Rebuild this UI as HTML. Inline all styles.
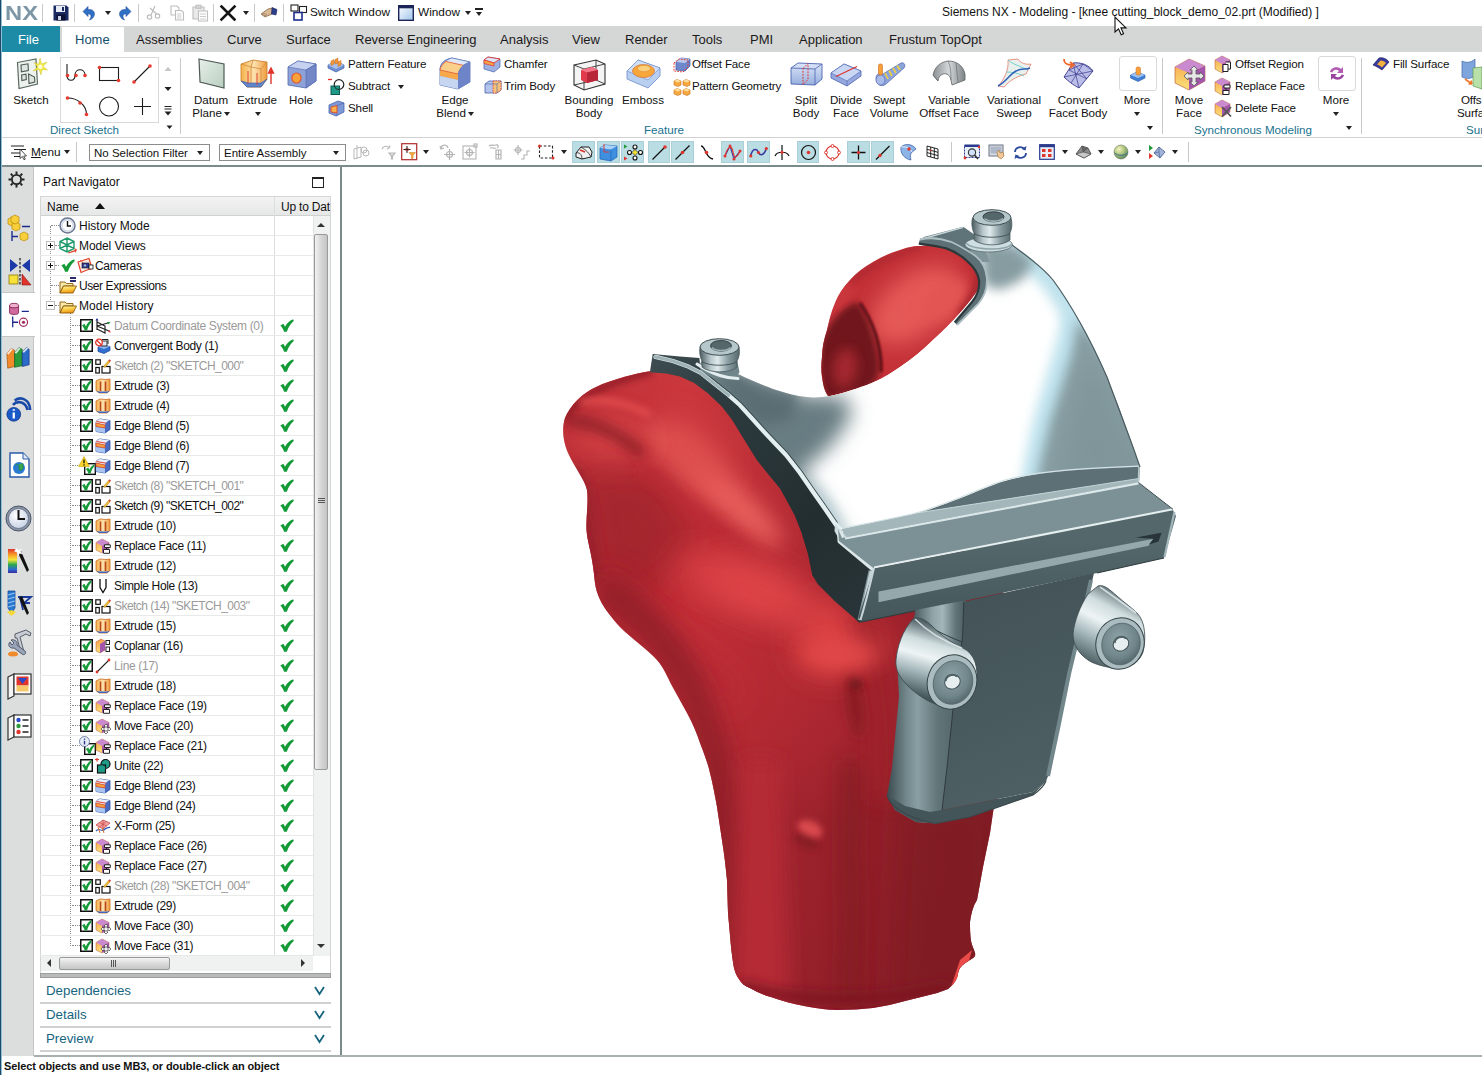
<!DOCTYPE html>
<html><head><meta charset="utf-8"><title>Siemens NX</title>
<style>
*{box-sizing:border-box;margin:0;padding:0}
html,body{width:1482px;height:1075px;overflow:hidden;background:#fff}
body{font-family:"Liberation Sans",sans-serif;font-size:12px;color:#111;position:relative}
.a{position:absolute}
.t{position:absolute;white-space:nowrap;line-height:14px;height:14px}
.c{text-align:center}
svg{position:absolute;overflow:visible}
#titlebar{left:0;top:0;width:1482px;height:26px;background:#fff}
#tabbar{left:0;top:26px;width:1482px;height:26px;background:#d5d6d6}
#ribbon{left:0;top:52px;width:1482px;height:86px;background:#fff;border-bottom:1px solid #d2d2d2}
#toolbar{left:0;top:138px;width:1482px;height:28px;background:#fff}
.vsep{position:absolute;width:1px;background:#c9c9c9}
.tab{position:absolute;top:31.5px;font-size:13px;line-height:15px;white-space:nowrap;color:#1a1a1a}
.rl{margin-top:-1px;position:absolute;font-size:11.6px;line-height:13px;white-space:nowrap;color:#111;text-align:center;transform:translateX(-50%)}
.rs{margin-top:-1px;position:absolute;font-size:11.6px;line-height:13px;white-space:nowrap;color:#111;letter-spacing:-0.15px}
.gl{margin-top:-1px;position:absolute;font-size:11.6px;line-height:13px;white-space:nowrap;color:#17718e;top:124px}
.dd{position:absolute;width:0;height:0;border-left:3px solid transparent;border-right:3px solid transparent;border-top:4px solid #222}
.row{position:absolute;left:40px;width:273px;height:20px;border-bottom:1px solid #e8eaea}
.row .n{position:absolute;top:3px;font-size:12px;line-height:14px;white-space:nowrap;color:#111;letter-spacing:-0.15px}
.row .g{color:#9a9a9a}
.hl{background:#badde4;border:1px solid #a9d0d9;position:absolute;top:141px;height:22px}
</style></head><body>
<div id="titlebar" class="a">
  <div class="t" style="left:5px;top:2px;font-size:21px;line-height:22px;height:22px;font-weight:700;color:#7c96a6;letter-spacing:0;transform:scaleX(1.13);transform-origin:left">NX</div>
  <div class="vsep" style="left:42px;top:4px;height:18px"></div>
  <!-- save -->
  <svg style="left:53px;top:5px" width="16" height="16" viewBox="0 0 16 16"><path d="M0.5 0.5h13l2 2v13h-15z" fill="#1b2a63"/><rect x="3" y="1" width="9" height="6" fill="#e8ecf4"/><rect x="9" y="2" width="2" height="4" fill="#1b2a63"/><rect x="3.5" y="9.5" width="9" height="6" fill="#0b1233"/><rect x="5" y="11" width="3" height="4" fill="#c8d0e4"/></svg>
  <div class="vsep" style="left:74px;top:4px;height:18px"></div>
  <!-- undo -->
  <svg style="left:82px;top:5px" width="15" height="16" viewBox="0 0 15 16"><path d="M1 6.5 L6 1.5 L6 4.5 C11 4 13.5 7 12 11 C11 13.5 9 14.5 7.5 15 C9.5 12.5 10 9 6 8.7 L6 11.5 Z" fill="#2f6fc4" stroke="#1d4fa0" stroke-width="0.6"/></svg>
  <div class="dd" style="left:105px;top:11px"></div>
  <!-- redo -->
  <svg style="left:117px;top:5px" width="15" height="16" viewBox="0 0 15 16"><path d="M14 6.5 L9 1.5 L9 4.5 C4 4 1.5 7 3 11 C4 13.5 6 14.5 7.5 15 C5.5 12.5 5 9 9 8.7 L9 11.5 Z" fill="#2f6fc4" stroke="#1d4fa0" stroke-width="0.6"/></svg>
  <div class="vsep" style="left:138px;top:4px;height:18px"></div>
  <!-- cut copy paste (disabled) -->
  <svg style="left:146px;top:5px" width="15" height="16" viewBox="0 0 15 16" fill="none" stroke="#bdbdbd" stroke-width="1.2"><path d="M9 1 L5 10 M4 3 L10.5 9"/><circle cx="3.5" cy="12" r="2.2"/><circle cx="11.5" cy="11" r="2.2"/></svg>
  <svg style="left:170px;top:5px" width="15" height="16" viewBox="0 0 15 16" fill="#fff" stroke="#bdbdbd" stroke-width="1.1"><path d="M1 1h6l2 2v7h-8z"/><path d="M5.5 5.5h6l2 2v7.5h-8z"/><path d="M7 9h4.5M7 11h4.5M7 13h4.5" stroke-width="0.8"/></svg>
  <svg style="left:192px;top:4px" width="17" height="18" viewBox="0 0 17 18" fill="#fff" stroke="#bdbdbd" stroke-width="1.1"><path d="M1 3h11v12h-11z" fill="#e9e9e9"/><path d="M4 1.2h5v3h-5z" fill="#d8d8d8"/><path d="M6.5 7h9v10h-9z"/><path d="M8 10h6M8 12.5h6M8 15h6" stroke-width="0.8"/></svg>
  <div class="vsep" style="left:213px;top:4px;height:18px"></div>
  <svg style="left:220px;top:5px" width="16" height="16" viewBox="0 0 16 16"><path d="M1.5 1.5 L14.5 14.5 M14.5 1.5 L1.5 14.5" stroke="#151515" stroke-width="2.6" stroke-linecap="square"/></svg>
  <div class="dd" style="left:243px;top:11px"></div>
  <div class="vsep" style="left:254px;top:4px;height:18px"></div>
  <svg style="left:260px;top:6px" width="18" height="13" viewBox="0 0 18 13"><path d="M1 8 L8 3 L13 2 L12 8 L5 11 Z" fill="#d8b896" stroke="#7a5a3a" stroke-width="0.7"/><path d="M12 1.5 L17 3.5 L16 9 L11.5 8 Z" fill="#2c3e8a" stroke="#1a2458" stroke-width="0.6"/><path d="M2 8.5l3-1M4 10l3-1.5" stroke="#7a5a3a" stroke-width="0.6"/></svg>
  <div class="vsep" style="left:283px;top:4px;height:18px"></div>
  <svg style="left:290px;top:4px" width="17" height="17" viewBox="0 0 17 17" fill="#fff" stroke="#222" stroke-width="1.1"><rect x="1" y="1" width="7" height="6"/><rect x="9.5" y="2.5" width="7" height="6"/><rect x="4" y="8.5" width="8" height="7.5" stroke="#1c2f8c" stroke-width="1.6"/></svg>
  <div class="t" style="left:310px;top:5px;font-size:11.8px">Switch Window</div>
  <svg style="left:398px;top:5px" width="16" height="16" viewBox="0 0 16 16"><defs><linearGradient id="wg" x1="0" y1="0" x2="1" y2="1"><stop offset="0" stop-color="#fff"/><stop offset="1" stop-color="#9fc4ec"/></linearGradient></defs><rect x="0.7" y="0.7" width="14.6" height="14.6" fill="url(#wg)" stroke="#1c2458" stroke-width="1.4"/><rect x="0.7" y="0.7" width="14.6" height="2.6" fill="#1c2458"/></svg>
  <div class="t" style="left:418px;top:5px;font-size:11.8px">Window</div>
  <div class="dd" style="left:465px;top:11px"></div>
  <div class="a" style="left:475px;top:8px;width:8px;height:1.5px;background:#222"></div>
  <div class="dd" style="left:476px;top:12px"></div>
  <div class="t" style="left:942px;top:5px;font-size:12px">Siemens NX - Modeling - [knee cutting_block_demo_02.prt (Modified) ]</div>

</div>
<div id="tabbar" class="a"></div>
<div class="a" style="left:0;top:26px;width:60px;height:26px;background:#1d8ba5"></div>
<div class="tab" style="left:18px;color:#fff">File</div>
<div class="a" style="left:62px;top:27px;width:62px;height:26px;background:#fff"></div>
<div class="tab" style="left:75px;color:#14506c">Home</div>
<div class="tab" style="left:136px">Assemblies</div>
<div class="tab" style="left:227px">Curve</div>
<div class="tab" style="left:286px">Surface</div>
<div class="tab" style="left:355px">Reverse Engineering</div>
<div class="tab" style="left:500px">Analysis</div>
<div class="tab" style="left:572px">View</div>
<div class="tab" style="left:625px">Render</div>
<div class="tab" style="left:692px">Tools</div>
<div class="tab" style="left:750px">PMI</div>
<div class="tab" style="left:799px">Application</div>
<div class="tab" style="left:889px">Frustum TopOpt</div>
<svg style="left:1114px;top:16px" width="14" height="20" viewBox="0 0 14 20"><path d="M1 1 L1 16 L4.5 12.8 L7.2 18.8 L9.6 17.7 L7 11.9 L12 11.9 Z" fill="#fff" stroke="#111" stroke-width="1.1" stroke-linejoin="miter"/></svg>
<div id="ribbon" class="a"></div>
<svg width="0" height="0" style="left:0;top:0"><defs>
<linearGradient id="gOr" x1="0" y1="0" x2="1" y2="0"><stop offset="0" stop-color="#f6b24a"/><stop offset="0.5" stop-color="#fde2b0"/><stop offset="1" stop-color="#ee9a3a"/></linearGradient>
<linearGradient id="gBl" x1="0" y1="0" x2="1" y2="1"><stop offset="0" stop-color="#c9d7f2"/><stop offset="1" stop-color="#7f96d0"/></linearGradient>
<linearGradient id="gBl2" x1="0" y1="0" x2="0" y2="1"><stop offset="0" stop-color="#dbe6f8"/><stop offset="1" stop-color="#97aedd"/></linearGradient>
<linearGradient id="gGr" x1="0" y1="0" x2="1" y2="1"><stop offset="0" stop-color="#e6efe8"/><stop offset="1" stop-color="#b9cfc0"/></linearGradient>
<linearGradient id="gPu" x1="0" y1="0" x2="1" y2="1"><stop offset="0" stop-color="#d9a6d6"/><stop offset="1" stop-color="#9a4fa0"/></linearGradient>
<linearGradient id="gOy" x1="0" y1="0" x2="0" y2="1"><stop offset="0" stop-color="#f6a14a"/><stop offset="1" stop-color="#fbe27a"/></linearGradient>
<linearGradient id="gMt" x1="0" y1="0" x2="1" y2="0"><stop offset="0" stop-color="#8a8f92"/><stop offset="0.5" stop-color="#d4d8da"/><stop offset="1" stop-color="#7c8285"/></linearGradient>
</defs></svg>
<!-- Sketch -->
<svg style="left:16px;top:57px" width="32" height="34" viewBox="0 0 32 34"><path d="M1.5 5.5 L20 2 L21.5 27 L3 31.5 Z" fill="#eef2ee" stroke="#5b6b62" stroke-width="1.2"/><path d="M5 8 L12 6.8 L12.4 13.5 L5.4 14.8Z M5.6 18 L10 17.2 L10.3 22.5 L5.9 23.5Z M12.5 17 L18.5 20 L18.8 25 L13 26.5Z" fill="#dfe6e0" stroke="#4b5a52" stroke-width="1.1"/><path d="M24 1 L25.5 7 L31 5 L27 9.5 L31.5 13 L26 12.5 L25 18 L23 12.5 L17 14 L21.5 10 L18 5.5 L22.8 7.2 Z" fill="#f4ea3c" stroke="#c9c23a" stroke-width="0.5"/><circle cx="24.3" cy="9.8" r="2.2" fill="#fffde0"/></svg>
<div class="rl" style="left:31px;top:94px">Sketch</div>
<div class="a" style="left:60px;top:57px;width:99px;height:66px;border:1px solid #d9d9d9;background:#fff"></div>
<svg style="left:62px;top:58px" width="96" height="64" viewBox="0 0 96 64" fill="none" stroke="#1d1d1d" stroke-width="1.1">
 <path d="M5 6 L5 17 C5 24 13 24 13 17 C13 10 23 10 23 17"/><circle cx="5.5" cy="17.5" r="1.8" fill="#e8392f" stroke="none"/><circle cx="14" cy="17.5" r="1.8" fill="#e8392f" stroke="none"/><circle cx="23" cy="17.5" r="1.8" fill="#e8392f" stroke="none"/>
 <rect x="37.5" y="9.500" width="19" height="13"/><circle cx="37.5" cy="9.500" r="1.8" fill="#e8392f" stroke="none"/><circle cx="56.5" cy="22.5" r="1.8" fill="#e8392f" stroke="none"/>
 <path d="M72 24 L88 8"/><circle cx="72" cy="24" r="1.8" fill="#e8392f" stroke="none"/><circle cx="88" cy="8" r="1.8" fill="#e8392f" stroke="none"/>
 <path d="M5.500 40 C16 40 24 47 24.500 56"/><circle cx="5.500" cy="40" r="1.800" fill="#e8392f" stroke="none"/><circle cx="18" cy="45" r="1.800" fill="#e8392f" stroke="none"/><circle cx="24.500" cy="56.500" r="1.800" fill="#e8392f" stroke="none"/>
 <circle cx="47" cy="48.500" r="9.500"/>
 <path d="M80.500 40 L80.500 57 M72 48.500 L89 48.500"/>
</svg>
<svg style="left:163px;top:64px" width="10" height="70" viewBox="0 0 10 70"><path d="M1.500 7 L8.500 7 L5 3 Z" fill="#c4c4c4"/><path d="M1.500 23 L8.500 23 L5 27 Z" fill="#222"/><path d="M1.500 42.500 H8.500 M1.500 45 H8.500" stroke="#222" stroke-width="1.2"/><path d="M1.500 47.500 L8.500 47.500 L5 51.500 Z" fill="#222"/><path d="M3.500 61.500 L9.500 61.500 L6.500 65 Z" fill="#222"/></svg>
<div class="gl" style="left:50px">Direct Sketch</div>
<div class="vsep" style="left:180px;top:58px;height:76px"></div>
<!-- Datum Plane -->
<svg style="left:197px;top:57px" width="30" height="33" viewBox="0 0 30 33"><path d="M2 2 L27 7 L27 31 L3 25 Z" fill="url(#gGr)" stroke="#4e5a54" stroke-width="1.2"/></svg>
<div class="rl" style="left:211px;top:94px">Datum</div><div class="rl" style="left:207px;top:107px">Plane</div><div class="dd" style="left:224px;top:112px"></div>
<!-- Extrude -->
<svg style="left:239px;top:57px" width="36" height="33" viewBox="0 0 36 33"><path d="M2 24 L2 7 L14 3 L28 5 L28 22 L22 30 L8 30 Z" fill="url(#gOr)" stroke="#c9782a" stroke-width="0.8"/><path d="M2 7 L12 10 L14 3 M12 10 L12 30 M12 10 L22 12 L28 5 M22 12 L22 30" stroke="#d08a3e" stroke-width="0.8" fill="none"/><path d="M2 24 L8 30 L22 30 L28 22 L22 26 L10 26 Z" fill="#5f86cc" stroke="#3c5ea8" stroke-width="0.6"/><path d="M32 27 L32 13 M29.500 16 L32 11 L34.500 16 Z" stroke="#e0342c" stroke-width="1.4" fill="#e0342c"/><path d="M9 14 V27 M18 16 V28" stroke="#e0342c" stroke-width="0.9"/></svg>
<div class="rl" style="left:257px;top:94px">Extrude</div><div class="dd" style="left:255px;top:112px"></div>
<!-- Hole -->
<svg style="left:286px;top:58px" width="32" height="32" viewBox="0 0 32 32"><path d="M2 9 L12 3 L30 6 L30 23 L20 30 L2 27 Z" fill="#8ea2d8" stroke="#5068b0" stroke-width="0.8"/><path d="M2 9 L20 12 L30 6 L12 3 Z" fill="#c6d2f0" stroke="#5068b0" stroke-width="0.6"/><path d="M20 12 L20 30 L30 23 L30 6 Z" fill="#7386c6" stroke="#5068b0" stroke-width="0.6"/><ellipse cx="10.500" cy="20" rx="4.600" ry="5" fill="#f9a13a" stroke="#e2572a" stroke-width="1.2"/></svg>
<div class="rl" style="left:301px;top:94px">Hole</div>
<!-- small col 1 -->
<svg style="left:327px;top:56px" width="18" height="17" viewBox="0 0 18 17"><path d="M1 9 L9 5 L17 9 L17 12 L9 16 L1 12 Z" fill="#6f8fd2" stroke="#3f5ea8" stroke-width="0.7"/><path d="M1 9 L9 13 L17 9 L9 5 Z" fill="#a9c0ea"/><path d="M4 5 L7 3.500 L7 8 L4 9.500Z M8 3.500 L11 2 L11 7 L8 8Z M11 6 L14 4.500 L14 9 L11 10.500Z" fill="#f59a3a" stroke="#c96a1e" stroke-width="0.5"/></svg>
<div class="rs" style="left:348px;top:58px">Pattern Feature</div>
<svg style="left:328px;top:78px" width="18" height="18" viewBox="0 0 18 18"><path d="M0 1.500 H4" stroke="#e0342c" stroke-width="1.3"/><circle cx="11" cy="6.500" r="4.800" fill="#fff" stroke="#222" stroke-width="1.200"/><rect x="3" y="8" width="8.500" height="8.500" fill="#1f9a86" stroke="#0f5a50" stroke-width="1"/><path d="M6.300 8 A4.800 4.800 0 0 0 11.500 11.300" fill="none" stroke="#222" stroke-width="1"/></svg>
<div class="rs" style="left:348px;top:80px">Subtract</div><div class="dd" style="left:398px;top:85px"></div>
<svg style="left:328px;top:100px" width="17" height="17" viewBox="0 0 17 17"><path d="M1 5 L10 1 L16 3 L16 12 L8 16 L1 13 Z" fill="#7f98d6" stroke="#4562ac" stroke-width="0.8"/><path d="M3 7 L9 5.500 L9 13 L3 12 Z" fill="#f7b04a" stroke="#d9482a" stroke-width="0.9"/><path d="M9 5.500 L16 3 M9 13 L9 16" stroke="#4562ac" stroke-width="0.6"/></svg>
<div class="rs" style="left:348px;top:102px">Shell</div>
<!-- Edge blend -->
<svg style="left:438px;top:56px" width="34" height="35" viewBox="0 0 34 35"><path d="M2 14 C2 6 8 3 14 2 L32 6 L32 26 L20 33 L2 29 Z" fill="#8fa6dc" stroke="#4562ac" stroke-width="0.8"/><path d="M2 14 C2 8 8 4 14 2 L32 6 C26 8 21 11 20 18 Z" fill="#dfe8f8" stroke="#4562ac" stroke-width="0.5"/><path d="M2 14 L20 18 L20 24 L2 20 Z" fill="#f7a94a"/><path d="M2 14 C3 10 5 7.500 8 5.500 L26 9.500 C23 11.500 21 14 20 18 Z" fill="#fbd08a" stroke="#e4572e" stroke-width="0.8"/><path d="M2 20 L20 24 L20 33 L2 29 Z" fill="#c7d6f0"/><path d="M20 18 L20 33 L32 26 L32 6 C26 8 21 11 20 18Z" fill="#6d84c8"/></svg>
<div class="rl" style="left:455px;top:94px">Edge</div><div class="rl" style="left:451px;top:107px">Blend</div><div class="dd" style="left:468px;top:112px"></div>
<!-- Chamfer / Trim body -->
<svg style="left:483px;top:56px" width="18" height="17" viewBox="0 0 18 17"><path d="M1 4 L5 1 L17 3 L17 11 L11 16 L1 13 Z" fill="#9db2e2" stroke="#4562ac" stroke-width="0.7"/><path d="M1 4 L11 7 L17 3 L5 1 Z" fill="#dce6f8" stroke="#e0342c" stroke-width="0.9"/><path d="M1 4 L11 7 L11 10 L1 7.500 Z" fill="#f6a54a" stroke="#e0342c" stroke-width="0.7"/></svg>
<div class="rs" style="left:504px;top:58px">Chamfer</div>
<svg style="left:484px;top:79px" width="18" height="16" viewBox="0 0 18 16"><path d="M1 5 L5 2 L17 2 L17 11 L13 14 L1 14 Z" fill="#b4c4ea" stroke="#4562ac" stroke-width="0.8"/><path d="M9 2 L17 2 L17 11 L13 14 L9 14 Z" fill="#f8c27a" stroke="#e0342c" stroke-width="0.8" stroke-dasharray="1.500 1"/><path d="M1 5 H13 V14 M13 5 L17 2" stroke="#4562ac" stroke-width="0.6" fill="none"/></svg>
<div class="rs" style="left:504px;top:80px">Trim Body</div>
<!-- Bounding Body -->
<svg style="left:572px;top:57px" width="35" height="35" viewBox="0 0 35 35"><path d="M2 8 L24 3 L33 7 L33 27 L12 33 L2 28 Z" fill="#f4f4f4" stroke="#333" stroke-width="1.100"/><path d="M2 8 L12 12 L33 7 M12 12 L12 33 M24 3 L24 23 L2 28 M24 23 L33 27" stroke="#333" stroke-width="0.900" fill="none"/><path d="M9 13 L20 10 L26 13 L26 23 L15 26 L9 23 Z" fill="#e03a4c"/><path d="M9 13 L15 15.500 L26 13 L20 10 Z" fill="#f27486"/><path d="M15 15.500 L15 26 L26 23 L26 13 Z" fill="#b8263a"/></svg>
<div class="rl" style="left:589px;top:94px">Bounding</div><div class="rl" style="left:589px;top:107px">Body</div>
<!-- Emboss -->
<svg style="left:626px;top:58px" width="36" height="32" viewBox="0 0 36 32"><path d="M1 13 L12 2 L34 10 L34 18 L22 30 L1 21 Z" fill="#b9cff0" stroke="#6c8cc8" stroke-width="0.800"/><path d="M1 13 L22 22 L34 10 L12 2 Z" fill="#cfe0f8" stroke="#6c8cc8" stroke-width="0.600"/><ellipse cx="17.500" cy="13" rx="11" ry="6.500" fill="#f7a63a" stroke="#d9712a" stroke-width="0.700"/><ellipse cx="18" cy="10.500" rx="6.500" ry="3.200" fill="#fbd07a" stroke="#e08a2e" stroke-width="0.600"/></svg>
<div class="rl" style="left:643px;top:94px">Emboss</div>
<svg style="left:673px;top:56px" width="18" height="17" viewBox="0 0 18 17"><path d="M3 6 L8 2 L17 3 L17 10 L12 15 L3 14 Z" fill="#6f88cc" stroke="#3c54a0" stroke-width="0.700"/><path d="M3 6 L12 7 L17 3 L8 2Z" fill="#b8c8ee"/><path d="M1 7 L6 3 L15 4 L15 11 L10 16 L1 15 Z" fill="none" stroke="#e0342c" stroke-width="1" stroke-dasharray="1.600 1.200"/></svg>
<div class="rs" style="left:692px;top:58px">Offset Face</div>
<svg style="left:673px;top:78px" width="18" height="18" viewBox="0 0 18 18"><g fill="#f7a83e" stroke="#c9701e" stroke-width="0.600"><path d="M1 3 L4 1.500 L8 3 L8 7 L5 8.500 L1 7 Z"/><path d="M10 3 L13 1.500 L17 3 L17 7 L14 8.500 L10 7 Z"/><path d="M1 12 L4 10.500 L8 12 L8 16 L5 17.500 L1 16 Z"/><path d="M10 12 L13 10.500 L17 12 L17 16 L14 17.500 L10 16 Z"/></g><g fill="#fde0a0"><path d="M1 3 L5 4.500 L8 3 L4 1.500Z"/><path d="M10 3 L14 4.500 L17 3 L13 1.500Z"/><path d="M1 12 L5 13.500 L8 12 L4 10.500Z"/><path d="M10 12 L14 13.500 L17 12 L13 10.500Z"/></g></svg>
<div class="rs" style="left:692px;top:80px">Pattern Geometry</div>
<div class="gl" style="left:644px">Feature</div>
<!-- Split Body -->
<svg style="left:790px;top:62px" width="33" height="25" viewBox="0 0 33 25"><path d="M1 6 L8 1 L32 2 L32 17 L25 23 L1 22 Z" fill="url(#gBl2)" stroke="#4a62b0" stroke-width="0.900"/><path d="M1 6 L25 7 L32 2 M25 7 L25 23" stroke="#4a62b0" stroke-width="0.800" fill="none"/><path d="M13 6.500 L18 1.500 L18 17.500 L13 22.500 Z" fill="none" stroke="#e0342c" stroke-width="1" stroke-dasharray="1.800 1.200"/></svg>
<div class="rl" style="left:806px;top:94px">Split</div><div class="rl" style="left:806px;top:107px">Body</div>
<!-- Divide Face -->
<svg style="left:830px;top:63px" width="32" height="24" viewBox="0 0 32 24"><path d="M1 10 L14 1 L31 8 L31 13 L17 23 L1 15 Z" fill="#95a9de" stroke="#4a62b0" stroke-width="0.800"/><path d="M1 10 L17 18 L31 8 L14 1 Z" fill="#c9d6f4" stroke="#4a62b0" stroke-width="0.600"/><path d="M17 18 L17 23" stroke="#4a62b0" stroke-width="0.600"/><path d="M6 13.500 L27 3.500" stroke="#e0342c" stroke-width="1.200"/></svg>
<div class="rl" style="left:846px;top:94px">Divide</div><div class="rl" style="left:846px;top:107px">Face</div>
<!-- Swept Volume -->
<svg style="left:873px;top:60px" width="34" height="28" viewBox="0 0 34 28"><path d="M3 18 C3 14 7 12 10 14 L28 3 C31 2 33 5 31 8 L13 24 C8 28 3 24 3 18Z" fill="#8da4da" stroke="#4a62b0" stroke-width="0.700"/><path d="M12 13 L15 19 M16 10.500 L19 16 M20 8 L23 13 M24 5.500 L27 10" stroke="#f2d23a" stroke-width="1.600"/><ellipse cx="7.500" cy="20" rx="4.500" ry="5" fill="#a9bce8" stroke="#4a62b0" stroke-width="0.600"/><rect x="5.500" y="4" width="4" height="11" rx="1.600" fill="#f6a03a" stroke="#cf6a1e" stroke-width="0.600"/></svg>
<div class="rl" style="left:889px;top:94px">Swept</div><div class="rl" style="left:889px;top:107px">Volume</div>
<!-- Variable Offset Face -->
<svg style="left:932px;top:60px" width="34" height="26" viewBox="0 0 34 26"><path d="M1 15 C3 6 9 2 16 1 C24 1 31 5 33 14 L33 20 L20 25 L19 20 C18 15 15 13 11 14 C8 15 6 18 6 21 Z" fill="url(#gMt)" stroke="#5c6264" stroke-width="0.800"/><path d="M16 1 C18 5 19 10 19 20 M24 3 L26 22 M1 15 L6 21" stroke="#5c6264" stroke-width="0.600" fill="none"/></svg>
<div class="rl" style="left:949px;top:94px">Variable</div><div class="rl" style="left:949px;top:107px">Offset Face</div>
<!-- Variational Sweep -->
<svg style="left:996px;top:58px" width="36" height="30" viewBox="0 0 36 30"><path d="M12 2 L22 1 C24 5 30 7 35 6 L30 16 C22 18 14 22 8 29 L2 28 C8 22 13 12 12 2Z" fill="#e8f0ee" stroke="#e87a6a" stroke-width="0.800"/><path d="M12 2 C16 6 24 8 32 12 M10 14 C16 14 22 15 28 18" stroke="#5cc8c0" stroke-width="0.800" fill="none"/><path d="M2 28 C10 24 14 16 20 13 C26 10 30 12 34 10" stroke="#2f5fb8" stroke-width="1.500" fill="none"/></svg>
<div class="rl" style="left:1014px;top:94px">Variational</div><div class="rl" style="left:1014px;top:107px">Sweep</div>
<!-- Convert Facet Body -->
<svg style="left:1061px;top:57px" width="34" height="32" viewBox="0 0 34 32"><path d="M3 20 L12 6 C20 5 28 8 32 14 L18 31 C12 28 7 24 3 20Z" fill="#b9bde8" stroke="#3a3a8c" stroke-width="0.900"/><path d="M12 6 L18 31 M3 20 L32 14 M8 13 L26 22 M12 6 L26 22 M22 7 L10 26 M22 7 L32 14 M8 13 L22 7" stroke="#3a3a8c" stroke-width="0.700" fill="none"/><path d="M3 2 C3 7 6 8 11 8 M9 5 L13 8 L9 11" stroke="#f0662a" stroke-width="1.800" fill="none"/></svg>
<div class="rl" style="left:1078px;top:94px">Convert</div><div class="rl" style="left:1078px;top:107px">Facet Body</div>
<!-- More -->
<div class="a" style="left:1119px;top:56px;width:38px;height:35px;border:1px solid #d9d9d9;border-radius:3px;background:#fff"></div>
<svg style="left:1130px;top:66px" width="16" height="16" viewBox="0 0 16 16"><path d="M0.500 9 L7 6 L15 9 L15 12 L8 15.500 L0.500 12Z" fill="#3f7fd6" stroke="#2a5aa8" stroke-width="0.600"/><path d="M0.500 9 L8 12 L15 9 L7 6Z" fill="#9cc2f2"/><rect x="6" y="1" width="4.500" height="8" rx="1.500" fill="#f6a03a" stroke="#cf6a1e" stroke-width="0.500"/></svg>
<div class="rl" style="left:1137px;top:94px">More</div><div class="dd" style="left:1134px;top:112px"></div>
<div class="dd" style="left:1147px;top:126px"></div>
<div class="vsep" style="left:1162px;top:58px;height:76px"></div>
<!-- Move Face -->
<svg style="left:1172px;top:57px" width="36" height="34" viewBox="0 0 36 34"><path d="M3 10 L17 2 L33 9 L33 24 L17 33 L3 26 Z" fill="url(#gOy)" stroke="#b0502a" stroke-width="0.600"/><path d="M3 10 L17 2 L33 9 L17 16 Z" fill="#c98ad0"/><path d="M17 16 L33 9 L33 24 L17 33 Z" fill="#a456ac"/><path d="M22 12 L26 16 H24 V20 H28 V18 L32 22 L28 26 V24 H24 V28 H26 L22 32 L18 28 H20 V24 H16 V26 L12 22 L16 18 V20 H20 V16 H18 Z" fill="#e6e6e6" stroke="#555" stroke-width="0.800" transform="translate(0,-3)"/></svg>
<div class="rl" style="left:1189px;top:94px">Move</div><div class="rl" style="left:1189px;top:107px">Face</div>
<svg style="left:1214px;top:55px" width="18" height="19" viewBox="0 0 18 19"><path d="M1 5 L8 1 L16 5 L16 13 L8 18 L1 14Z" fill="url(#gOy)" stroke="#b0502a" stroke-width="0.500"/><path d="M1 5 L8 1 L16 5 L8 9Z" fill="#c98ad0"/><path d="M8 9 L16 5 L16 13 L8 18Z" fill="#a456ac"/><path d="M9 9.500 H14 V16.500 H9Z M11.500 7 H16.500 V14 H14" fill="#fff" stroke="#222" stroke-width="1"/></svg>
<div class="rs" style="left:1235px;top:58px">Offset Region</div>
<svg style="left:1214px;top:77px" width="18" height="19" viewBox="0 0 18 19"><path d="M1 5 L8 1 L16 5 L16 13 L8 18 L1 14Z" fill="url(#gOy)" stroke="#b0502a" stroke-width="0.500"/><path d="M1 5 L8 1 L16 5 L8 9Z" fill="#c98ad0"/><path d="M8 9 L16 5 L16 13 L8 18Z" fill="#a456ac"/><path d="M9 13.500 H15 V17.500 H9Z M10 8 H16 V11 H10Z" fill="#fff" stroke="#222" stroke-width="1"/><path d="M12 11 V13.500" stroke="#222" stroke-width="1"/></svg>
<div class="rs" style="left:1235px;top:80px">Replace Face</div>
<svg style="left:1214px;top:99px" width="18" height="19" viewBox="0 0 18 19"><path d="M1 5 L8 1 L16 5 L16 13 L8 18 L1 14Z" fill="url(#gOy)" stroke="#b0502a" stroke-width="0.500"/><path d="M1 5 L8 1 L16 5 L8 9Z" fill="#c98ad0"/><path d="M8 9 L16 5 L16 13 L8 18Z" fill="#a456ac"/><path d="M8 8 L17 17.500 M17 8 L8 17.500" stroke="#555" stroke-width="1.800"/></svg>
<div class="rs" style="left:1235px;top:102px">Delete Face</div>
<div class="a" style="left:1318px;top:56px;width:38px;height:35px;border:1px solid #d9d9d9;border-radius:3px;background:#fff"></div>
<svg style="left:1328px;top:65px" width="18" height="17" viewBox="0 0 18 17"><path d="M2 7 C3 2 10 1 13 4 L15 2 L15 8 L9 8 L11 6 C9 4 5 4.500 4.500 7.500Z" fill="#b45ab4"/><path d="M16 10 C15 15 8 16 5 13 L3 15 L3 9 L9 9 L7 11 C9 13 13 12.500 13.500 9.500Z" fill="#9a46a0"/></svg>
<div class="rl" style="left:1336px;top:94px">More</div><div class="dd" style="left:1333px;top:112px"></div>
<div class="gl" style="left:1194px">Synchronous Modeling</div>
<div class="dd" style="left:1346px;top:126px"></div>
<div class="vsep" style="left:1361px;top:58px;height:76px"></div>
<svg style="left:1372px;top:57px" width="18" height="15" viewBox="0 0 18 15"><path d="M1 8 L7 1 C11 0 15 2 17 5 L10 13 C7 11 4 9 1 8Z" fill="#3a3a9c" stroke="#22226c" stroke-width="0.700"/><path d="M5 7.500 L8.500 3.500 C11 3.500 13 4.500 14 6 L10 10.500 C8.500 9 7 8 5 7.500Z" fill="#f5b13e"/></svg>
<div class="rs" style="left:1393px;top:58px">Fill Surface</div>
<svg style="left:1462px;top:58px" width="20" height="32" viewBox="0 0 20 32"><path d="M0 3 C4 5 9 5 13 1 L13 18 C9 21 4 21 0 19Z" fill="#7fa6dc" stroke="#3f66ac" stroke-width="0.700"/><path d="M11 10 L20 9 L20 31 L11 28Z" fill="#b9e0a8" stroke="#5f9a4e" stroke-width="0.700"/><path d="M3 21 L10 26 M10 26 L6.500 26 M10 26 L9 22.500" stroke="#f0762a" stroke-width="1.600" fill="none"/></svg>
<div class="rs" style="left:1461px;top:94px">Offs</div><div class="rs" style="left:1457px;top:107px">Surfa</div>
<div class="gl" style="left:1466px">Sur</div>
<div id="toolbar" class="a"></div>
<div class="a" style="left:0;top:165px;width:1482px;height:2px;background:#7b8b8b"></div>
<!-- Menu -->
<svg style="left:10px;top:144px" width="18" height="16" viewBox="0 0 18 16"><path d="M1 2 H14 M4 5.500 H16 M1 9 H10 M4 12.500 H10" stroke="#222" stroke-width="1.200"/><path d="M10 5 L10 14.500 L12.300 12.500 L14 15.800 L15.300 15.100 L13.700 12 L16.500 12 Z" fill="#fff" stroke="#222" stroke-width="0.800"/></svg>
<div class="t" style="left:31px;top:145px;font-size:11.800px"><span style="text-decoration:underline">M</span>enu</div>
<div class="dd" style="left:64px;top:150px"></div>
<div class="vsep" style="left:76px;top:142px;height:20px"></div>
<div class="a" style="left:89px;top:144px;width:121px;height:17px;border:1px solid #8c8c8c;background:#fff"></div>
<div class="t" style="left:94px;top:146px;font-size:11.500px">No Selection Filter</div>
<div class="dd" style="left:197px;top:151px;border-left-width:3.500px;border-right-width:3.500px"></div>
<div class="a" style="left:219px;top:144px;width:127px;height:17px;border:1px solid #8c8c8c;background:#fff"></div>
<div class="t" style="left:224px;top:146px;font-size:11.500px">Entire Assembly</div>
<div class="dd" style="left:333px;top:151px;border-left-width:3.500px;border-right-width:3.500px"></div>
<!-- disabled/gray icons -->
<svg style="left:353px;top:143px" width="18" height="18" viewBox="0 0 18 18" fill="none" stroke="#b9b9b9" stroke-width="1"><path d="M4 2 V16 M1 6 L8 4 V14 L1 16Z"/><circle cx="11" cy="7" r="3"/><circle cx="13" cy="10" r="3"/></svg>
<svg style="left:380px;top:144px" width="16" height="16" viewBox="0 0 16 16" fill="none" stroke="#b9b9b9" stroke-width="1.200"><path d="M2 5 C4 1 8 2 9 4 L7 5 M9 4 L10 1.500"/><path d="M9 9 H15 L12.500 12 V15 H11.500 V12Z" fill="#e0e0e0"/></svg>
<svg style="left:401px;top:143px" width="17" height="18" viewBox="0 0 17 18"><rect x="0.700" y="0.700" width="15" height="16" fill="#fff" stroke="#b02a2a" stroke-width="1.200"/><path d="M6 3 V10 M2.500 6.500 H9.500" stroke="#222" stroke-width="1"/><circle cx="6" cy="6.500" r="1.500" fill="none" stroke="#b02a2a" stroke-width="0.800"/><path d="M8 9.500 H14.500 L12 12.500 V15.500 H10.500 V12.500Z" fill="#f5a93a" stroke="#c9781e" stroke-width="0.500"/></svg>
<div class="dd" style="left:423px;top:150px"></div>
<svg style="left:439px;top:143px" width="18" height="18" viewBox="0 0 18 18" fill="none" stroke="#b4b4b4" stroke-width="1.200"><path d="M2 5 C3 1 8 1 9 5 M1 3 L2 6 L5 5"/><circle cx="10.500" cy="11.500" r="3"/><path d="M10.500 6 V17 M5 11.500 H16"/></svg>
<svg style="left:462px;top:143px" width="17" height="17" viewBox="0 0 17 17" fill="none" stroke="#b4b4b4" stroke-width="1.100"><rect x="1" y="3" width="13" height="13"/><rect x="12" y="1" width="3" height="3"/><circle cx="7.500" cy="9.500" r="3"/><path d="M7.500 4.500 V14.500 M2.500 9.500 H12.500"/></svg>
<svg style="left:487px;top:143px" width="18" height="18" viewBox="0 0 18 18" fill="none" stroke="#b4b4b4" stroke-width="1.200"><path d="M2 3 C4 1 7 3 9 2 C11 1 12 4 10 5 M3 5 C5 4 7 6 9 5"/><path d="M9 7 H14 V16 H9Z M11.500 7 V16 M9 11.500 H14"/></svg>
<svg style="left:513px;top:144px" width="18" height="17" viewBox="0 0 18 17" fill="none" stroke="#b4b4b4" stroke-width="1.100"><circle cx="5" cy="6" r="2.500"/><path d="M5 1 V11 M0.500 6 H9.500 M8 15 H11 V11 H14 V7 H17"/></svg>
<svg style="left:538px;top:144px" width="17" height="16" viewBox="0 0 17 16" fill="none"><rect x="1.500" y="2" width="13" height="12" stroke="#222" stroke-width="1.100" stroke-dasharray="2.500 1.800"/><circle cx="1.500" cy="2" r="1.500" fill="#e0342c"/><circle cx="15" cy="14" r="1.500" fill="#e0342c"/></svg>
<div class="dd" style="left:561px;top:150px"></div>
<!-- highlighted snap buttons -->
<div class="hl" style="left:572px;width:23px"></div>
<svg style="left:574px;top:144px" width="19" height="17" viewBox="0 0 19 17"><path d="M2 9 L7 3 L15 3 L18 8 L17 13 L8 15 L2 13Z" fill="#f0f0f0" stroke="#222" stroke-width="1"/><path d="M2 9 C5 8 8 10 8 15 M7 3 C10 5 14 7 17 13" stroke="#222" stroke-width="0.800" fill="none"/><path d="M6 6 L11 8" stroke="#e0342c" stroke-width="1.600"/></svg>
<div class="hl" style="left:597px;width:23px"></div>
<svg style="left:599px;top:143px" width="19" height="19" viewBox="0 0 19 19"><path d="M1 5 L6 2 L18 3 L18 14 L12 18 L1 16Z" fill="#3f8fe0" stroke="#1d5fb0" stroke-width="0.700"/><path d="M1 5 L12 6.500 L18 3 L6 2Z" fill="#a9d2f6"/><path d="M12 6.500 V18" stroke="#1d5fb0" stroke-width="0.700"/><path d="M5 1 V9 H10" stroke="#e0342c" stroke-width="0.900" fill="none"/></svg>
<div class="hl" style="left:621px;width:23px"></div>
<svg style="left:623px;top:143px" width="20" height="19" viewBox="0 0 20 19"><path d="M1 1.500 L4.500 3.500 L1 5.500Z" fill="#1f9a3a"/><path d="M1 13.500 L4.500 15.500 L1 17.500Z" fill="#e0342c"/><circle cx="12" cy="4" r="2" fill="#fff" stroke="#111" stroke-width="1.100"/><circle cx="6.500" cy="9.500" r="2" fill="#fff" stroke="#111" stroke-width="1.100"/><circle cx="17.500" cy="9.500" r="2" fill="#fff" stroke="#111" stroke-width="1.100"/><circle cx="12" cy="15" r="2" fill="#fff" stroke="#111" stroke-width="1.100"/><path d="M12 6.500 L15 9.500 L12 12.500 L9 9.500Z" fill="#f4e23a" stroke="#111" stroke-width="0.600"/></svg>
<div class="hl" style="left:648px;width:22px"></div>
<svg style="left:651px;top:144px" width="17" height="17" viewBox="0 0 17 17"><path d="M1.500 15.500 L14 3" stroke="#111" stroke-width="1.200"/><circle cx="14" cy="3" r="1.800" fill="#e0342c"/></svg>
<div class="hl" style="left:671px;width:23px"></div>
<svg style="left:674px;top:144px" width="17" height="17" viewBox="0 0 17 17"><path d="M1.500 15.500 L15.500 1.500" stroke="#111" stroke-width="1.200"/><circle cx="8.500" cy="8.500" r="1.800" fill="#e0342c"/></svg>
<svg style="left:700px;top:144px" width="14" height="17" viewBox="0 0 14 17"><path d="M1 2 C6 2 5 14 13 15" stroke="#111" stroke-width="1.300" fill="none"/><circle cx="6.500" cy="8.500" r="1.800" fill="#e0342c"/></svg>
<div class="hl" style="left:721px;width:23px"></div>
<svg style="left:723px;top:143px" width="19" height="19" viewBox="0 0 19 19"><path d="M2 13 L7 3 L11 16 L17 8" stroke="#3a3aa0" stroke-width="1.100" fill="none"/><path d="M2 13 C5 2 9 2 10 9 C11 16 14 15 17 8" stroke="#e0342c" stroke-width="1.200" fill="none"/><g fill="#e0342c"><circle cx="2" cy="13" r="1.500"/><circle cx="7" cy="3" r="1.500"/><circle cx="11" cy="16" r="1.500"/><circle cx="17" cy="8" r="1.500"/></g></svg>
<div class="hl" style="left:747px;width:23px"></div>
<svg style="left:749px;top:145px" width="19" height="15" viewBox="0 0 19 15"><path d="M1.500 11 C4 2 8 4 9.500 7.500 C11 11 15 11 17.500 3" stroke="#3a3aa0" stroke-width="1.600" fill="none"/><g fill="#e0342c"><circle cx="1.800" cy="11" r="1.600"/><circle cx="9.500" cy="7.500" r="1.600"/><circle cx="17.300" cy="3.500" r="1.600"/></g></svg>
<svg style="left:774px;top:144px" width="16" height="17" viewBox="0 0 16 17"><path d="M8 1 V16 M1 12 C3 7 13 7 15 12" stroke="#111" stroke-width="1.200" fill="none"/><circle cx="8" cy="8.300" r="1.500" fill="#e0342c"/></svg>
<div class="hl" style="left:797px;width:22px"></div>
<svg style="left:800px;top:144px" width="17" height="17" viewBox="0 0 17 17"><circle cx="8.500" cy="8.500" r="7" fill="none" stroke="#111" stroke-width="1.200"/><circle cx="8.500" cy="8.500" r="1.800" fill="#e0342c"/></svg>
<svg style="left:824px;top:144px" width="17" height="17" viewBox="0 0 17 17"><circle cx="8.500" cy="8.500" r="6.500" fill="none" stroke="#e0342c" stroke-width="1.200"/><g fill="#fff" stroke="#e0342c" stroke-width="0.900"><circle cx="8.500" cy="2" r="1.500"/><circle cx="8.500" cy="15" r="1.500"/><circle cx="2" cy="8.500" r="1.500"/><circle cx="15" cy="8.500" r="1.500"/></g></svg>
<div class="hl" style="left:847px;width:23px"></div>
<svg style="left:850px;top:144px" width="17" height="17" viewBox="0 0 17 17"><path d="M8.500 1.500 V15.500 M1.500 8.500 H15.500" stroke="#111" stroke-width="1.300"/><circle cx="8.500" cy="8.500" r="1.600" fill="#e0342c"/></svg>
<div class="hl" style="left:871px;width:23px"></div>
<svg style="left:874px;top:144px" width="17" height="17" viewBox="0 0 17 17"><path d="M2 15.500 L15.500 2" stroke="#111" stroke-width="1.200"/><circle cx="6" cy="11.500" r="1.700" fill="#e0342c"/></svg>
<svg style="left:899px;top:143px" width="18" height="18" viewBox="0 0 18 18"><path d="M2 4 C6 0 14 1 17 6 L13 9 C11 11 11 14 12 17 C6 16 1 11 2 4Z" fill="#8cb4e6" stroke="#3f66ac" stroke-width="0.800"/><path d="M2 4 C6 3 11 5 13 9" stroke="#fff" stroke-width="0.800" fill="none"/><circle cx="10" cy="6" r="1.700" fill="#e0342c"/></svg>
<svg style="left:926px;top:145px" width="13" height="15" viewBox="0 0 13 15" fill="none" stroke="#111" stroke-width="0.900"><path d="M1 1 L12 4 V14 L1 11Z M1 4.300 L12 7.300 M1 7.600 L12 10.600 M4.700 2 V12 M8.300 3 V13"/><circle cx="4.700" cy="5.300" r="0.900" fill="#e0342c" stroke="none"/></svg>
<div class="vsep" style="left:951px;top:142px;height:20px"></div>
<svg style="left:963px;top:143px" width="18" height="18" viewBox="0 0 18 18"><rect x="1.500" y="2.500" width="15" height="12" fill="#e8f0fa" stroke="#2a3a8c" stroke-width="1" stroke-dasharray="2 1"/><rect x="1.500" y="1.500" width="15" height="2.500" fill="#2a3a8c"/><circle cx="9" cy="9.500" r="3.600" fill="#cfe2f8" stroke="#333" stroke-width="1.100"/><path d="M11.500 12 L15 16" stroke="#333" stroke-width="1.600"/><circle cx="2" cy="15" r="1.400" fill="#e0342c"/><circle cx="16" cy="4" r="1.200" fill="#e0342c"/></svg>
<svg style="left:988px;top:144px" width="18" height="16" viewBox="0 0 18 16"><rect x="1" y="1" width="14" height="11" fill="#d8dce4" stroke="#6b7484" stroke-width="1"/><rect x="2.500" y="2.500" width="11" height="7" fill="#aeb8c8"/><path d="M9 8 L11 6 L12 9 L15 8 L16 12 L13 15 L10 13Z" fill="#f2c89a" stroke="#a0703a" stroke-width="0.600"/></svg>
<svg style="left:1012px;top:144px" width="17" height="17" viewBox="0 0 17 17" fill="none" stroke="#2a4a9c" stroke-width="1.800"><path d="M3 8 C3 3 10 1.500 13 5.500"/><path d="M14 9 C14 14 7 15.500 4 11.500"/><path d="M14.500 2 L13.500 6.500 L9.500 5Z M2.500 15 L3.500 10.500 L7.500 12Z" fill="#2a4a9c" stroke="none"/></svg>
<svg style="left:1039px;top:144px" width="16" height="16" viewBox="0 0 16 16"><rect x="0.700" y="0.700" width="14.600" height="14.600" fill="#e8eef8" stroke="#2a3a8c" stroke-width="1.200"/><rect x="0.700" y="0.700" width="14.600" height="2.500" fill="#2a3a8c"/><g fill="#e0342c"><rect x="3" y="5" width="3.500" height="3"/><rect x="9" y="5" width="3.500" height="3"/><rect x="3" y="10" width="3.500" height="3"/><rect x="9" y="10" width="3.500" height="3"/></g></svg>
<div class="dd" style="left:1062px;top:150px"></div>
<svg style="left:1075px;top:145px" width="17" height="14" viewBox="0 0 17 14"><path d="M1 9 L7 1 L13 3 L16 9 L9 13Z" fill="#8a8a8a" stroke="#444" stroke-width="0.800"/><path d="M1 9 L9 13 L16 9 L8 7Z" fill="#c8c8c8" stroke="#444" stroke-width="0.600"/><path d="M7 1 L8 7 L13 3" fill="#666" stroke="#444" stroke-width="0.500"/></svg>
<div class="dd" style="left:1098px;top:150px"></div>
<svg style="left:1113px;top:144px" width="16" height="16" viewBox="0 0 16 16"><defs><radialGradient id="sg" cx="0.350" cy="0.300" r="0.800"><stop offset="0" stop-color="#f6f2c0"/><stop offset="0.500" stop-color="#a9c27a"/><stop offset="1" stop-color="#4a7a5a"/></radialGradient></defs><circle cx="8" cy="8" r="7" fill="url(#sg)" stroke="#6b7a5a" stroke-width="0.600"/><path d="M1.500 9 C5 12 11 12 14.500 9" stroke="#3a6a8c" stroke-width="1" fill="none"/></svg>
<div class="dd" style="left:1135px;top:150px"></div>
<svg style="left:1148px;top:144px" width="18" height="16" viewBox="0 0 18 16"><path d="M1 1 L5 4 L1 7Z" fill="#1f9a3a"/><path d="M1 9 L5 12 L1 15Z" fill="#e0342c"/><path d="M6 9 L11 3 L17 8 L12 14Z" fill="#9fb4d8" stroke="#4a5a8c" stroke-width="0.800"/><path d="M6 9 L11 8 L12 14 M11 8 L11 3" stroke="#4a5a8c" stroke-width="0.600" fill="none"/></svg>
<div class="dd" style="left:1172px;top:150px"></div>
<div class="vsep" style="left:1188px;top:142px;height:20px"></div>
<!-- left panel -->
<div class="a" style="left:0;top:167px;width:34px;height:889px;background:#dcdddd;border-right:1px solid #c4c6c6"></div>
<div class="a" style="left:0;top:0;width:1px;height:1075px;background:#1c4a68"></div><div class="a" style="left:1px;top:0;width:1px;height:1075px;background:#8fbfd2"></div>
<div class="a" style="left:2px;top:292px;width:33px;height:45px;background:#fff;border-top:1px solid #c4c6c6;border-bottom:1px solid #c4c6c6"></div>
<div class="a" style="left:340px;top:167px;width:2px;height:889px;background:#7b8b8b"></div>
<div class="a" style="left:34px;top:1055px;width:1448px;height:2px;background:#a9b0b0"></div>
<div class="a" style="left:2px;top:1057px;width:1480px;height:18px;background:#fff"></div>
<div class="t" style="left:4px;top:1059px;font-size:11px;font-weight:700;letter-spacing:-0.1px">Select objects and use MB3, or double-click an object</div>
<div class="t" style="left:43px;top:175px;font-size:12px">Part Navigator</div>
<div class="a" style="left:312px;top:177px;width:12px;height:11px;border:1px solid #222;border-top-width:2.5px;background:#fff"></div>
<div class="a" style="left:40px;top:196px;width:291px;height:780px;border:1px solid #d4d6d6;background:#fff"></div>
<div class="a" style="left:41px;top:197px;width:289px;height:19px;background:linear-gradient(#f3f3f3,#e6e7e7);border-bottom:1px solid #d0d2d2"></div>
<div class="a" style="left:274px;top:197px;width:1px;height:758px;background:#dcdede"></div>
<div class="t" style="left:47px;top:200px;font-size:12px">Name</div>
<div class="a" style="left:95px;top:203px;width:0;height:0;border-left:5px solid transparent;border-right:5px solid transparent;border-bottom:6px solid #111"></div>
<div class="t" style="left:281px;top:200px;font-size:12px;width:49px;overflow:hidden;letter-spacing:-0.2px">Up to Date</div>

<svg width="0" height="0" style="left:0;top:0"><defs>
<symbol id="i-chk" viewBox="0 0 13 13"><rect x="0.75" y="0.75" width="11.5" height="11.5" fill="#fff" stroke="#111" stroke-width="1.5"/><path d="M2 6.400 L4.600 4.800 L5.800 7.400 C7 4.600 8.800 2.800 10.800 1.600 L11.600 3 C9.600 5 8.200 7.800 7 11.400 L4.800 11.400 C4.200 9.400 3.200 7.800 2 6.400Z" fill="#149a36"/></symbol>
<symbol id="i-ok" viewBox="0 0 14 13"><path d="M0.300 6.600 L3.400 4.800 L5 7.800 C6.800 4.400 9.600 1.800 13.200 0.300 L13.800 2 C10.800 4.400 8.600 7.800 6.800 12.700 L4 12.700 C3.200 10.200 2 8.200 0.300 6.600Z" fill="#149a36"/></symbol>
<symbol id="i-ext" viewBox="0 0 16 16"><path d="M1 12.500 V3 L5 1 L11 1.500 L15 1 V12.500 L12 15 H4Z" fill="url(#gOr)" stroke="#c96a1e" stroke-width="0.800"/><path d="M5.500 3.500 V13 M10.500 3.500 V13" stroke="#b8481a" stroke-width="1.600"/><path d="M1 12.500 L4 15 H12 L15 12.500 L12 13.500 H4Z" fill="#3f66c0"/></symbol>
<symbol id="i-eb" viewBox="0 0 16 16"><path d="M1 5 C1 2.500 3 1.500 5 1 L15 2.500 V11.500 L10 15 L1 13.500Z" fill="#4a6ac0" stroke="#2a4a9c" stroke-width="0.800"/><path d="M1 5 C1 3 3 1.500 5 1 L15 2.500 C12 3 10.500 4.500 10 7Z" fill="#e8eefa"/><path d="M1 5 L10 7 V10 L1 8.500Z" fill="#f7a03a" stroke="#e0442c" stroke-width="0.700"/><path d="M1.500 3.500 L11 5.200" stroke="#e0442c" stroke-width="1"/><path d="M1 9 L10 10.500 V15 L1 13.500Z" fill="#a9c4ee"/></symbol>
<symbol id="i-sk" viewBox="0 0 16 16"><rect x="0.800" y="1.800" width="4.500" height="4.500" fill="#fff" stroke="#111" stroke-width="1.200"/><rect x="0.800" y="9.500" width="3.500" height="5.500" fill="#fff" stroke="#111" stroke-width="1.200"/><rect x="7" y="8.500" width="8" height="6.500" fill="#fff" stroke="#111" stroke-width="1.200"/><path d="M8.500 8.500 L13.500 2.500 L15 4 L10 9.500Z" fill="#f2c83a" stroke="#a06a1e" stroke-width="0.500"/><path d="M13.500 2.500 L14.600 1.200 L15.800 2.600 L15 4Z" fill="#e0342c"/></symbol>
<symbol id="i-rf" viewBox="0 0 16 16"><path d="M1 4.500 L7 1 L14 4.500 V11 L7 15 L1 12Z" fill="url(#gOy)" stroke="#b0502a" stroke-width="0.500"/><path d="M1 4.500 L7 1 L14 4.500 L7 8Z" fill="#c98ad0"/><path d="M7 8 L14 4.500 V11 L7 15Z" fill="#a456ac"/><path d="M8.500 11.500 H14.500 V15.300 H8.500Z M9.500 6.800 H15.300 V9.500 H9.500Z" fill="#fff" stroke="#222" stroke-width="1"/><path d="M11.500 9.500 V11.500" stroke="#222" stroke-width="1"/></symbol>
<symbol id="i-mf" viewBox="0 0 16 16"><path d="M1 4.500 L7 1 L14 4.500 V11 L7 15 L1 12Z" fill="url(#gOy)" stroke="#b0502a" stroke-width="0.500"/><path d="M1 4.500 L7 1 L14 4.500 L7 8Z" fill="#c98ad0"/><path d="M7 8 L14 4.500 V11 L7 15Z" fill="#a456ac"/><path d="M11 6 L13 8 H12 V10 H14 V9 L16 11 L14 13 V12 H12 V14 H13 L11 16 L9 14 H10 V12 H8 V13 L6 11 L8 9 V10 H10 V8 H9Z" fill="#f2f2f2" stroke="#444" stroke-width="0.700"/></symbol>
<symbol id="i-csys" viewBox="0 0 16 16"><path d="M2 1 V12 M2 4 L10 8 V15 L2 11 M2 8 L13 5 M2 8 L14 13" stroke="#222" stroke-width="1.200" fill="none"/><path d="M12 4 L15.500 4 L13.500 6.500Z" fill="#1f9a3a"/><path d="M13 14 L15.800 14.500 L14.500 12Z" fill="#e0342c"/><path d="M0.500 2.500 L2 0 L3.500 2.500Z" fill="#2a3aa0"/></symbol>
<symbol id="i-conv" viewBox="0 0 16 16"><path d="M3 9 L7 7 L15 8.500 V12.500 L9 15.500 L3 13.500Z" fill="#2f6fd0" stroke="#1a3f90" stroke-width="0.700"/><path d="M3 9 L9 11 L15 8.500 L7 7Z" fill="#8fb8f0"/><rect x="6" y="3" width="6" height="5" fill="#dfe8f8" stroke="#222" stroke-width="0.900"/><path d="M7 1.500 H13 M13 1.500 V6" stroke="#222" stroke-width="1"/><circle cx="4" cy="4.500" r="3.300" fill="#fff" stroke="#e0342c" stroke-width="1.300"/><path d="M1.800 2.300 L6.200 6.700" stroke="#e0342c" stroke-width="1.300"/></symbol>
<symbol id="i-hole" viewBox="0 0 16 16"><path d="M5 1 V9.500 L8 14.500 L11 9.500 V1" fill="none" stroke="#111" stroke-width="1.300"/></symbol>
<symbol id="i-cop" viewBox="0 0 16 16"><path d="M1 4 L6 1 L10 3 V12 L5 15 L1 13Z" fill="url(#gOy)" stroke="#b0502a" stroke-width="0.500"/><path d="M5 6 L10 3 V12 L5 15Z" fill="#a456ac"/><rect x="11" y="2.500" width="3.500" height="4" fill="#fff" stroke="#222" stroke-width="1"/><rect x="11" y="9" width="3.500" height="4.500" fill="#fff" stroke="#222" stroke-width="1"/></symbol>
<symbol id="i-line" viewBox="0 0 16 16"><path d="M2 14 L14 2" stroke="#222" stroke-width="1.100"/><circle cx="2" cy="14" r="1.400" fill="#e0342c"/><circle cx="14" cy="2" r="1.400" fill="#e0342c"/></symbol>
<symbol id="i-uni" viewBox="0 0 16 16"><path d="M0 1.500 H4 M2 -0.500 V3.500" stroke="#e0342c" stroke-width="1.200"/><circle cx="10.500" cy="6" r="4.500" fill="#1f9a86" stroke="#111" stroke-width="1.200"/><rect x="2.500" y="7" width="8" height="8" fill="#1f9a86" stroke="#111" stroke-width="1.200"/><path d="M6.200 7.200 A4.500 4.500 0 0 0 10.300 10.400" stroke="#1f9a86" stroke-width="2.200" fill="none"/></symbol>
<symbol id="i-xf" viewBox="0 0 16 16"><path d="M1 7 L8 2 L15 5 L8 11Z" fill="#f2a0a0" stroke="#c03a3a" stroke-width="0.700"/><path d="M4.500 4.500 L11.500 8 M8 2 L8 11 M11.500 3.500 L4.500 9" stroke="#c03a3a" stroke-width="0.600"/><path d="M1 13 C4 9 7 15 10 11 C12 9 14 10 15 9" stroke="#2f5fb8" stroke-width="1.300" fill="none"/><path d="M3 9 L5 15 M7 9.500 L9 15" stroke="#e0762a" stroke-width="1"/></symbol>
<symbol id="i-clock" viewBox="0 0 17 17"><circle cx="8.500" cy="8.500" r="7.500" fill="#e8eef6" stroke="#6b7890" stroke-width="1.500"/><circle cx="8.500" cy="8.500" r="5.500" fill="#fff" stroke="#aab4c8" stroke-width="0.600"/><path d="M8.500 4 V9 H12" stroke="#111" stroke-width="1.400" fill="none"/></symbol>
<symbol id="i-views" viewBox="0 0 18 17"><path d="M8 1 L15 4.500 V11.500 L8 15 L1 11.500 V4.500Z M1 4.500 L8 8 L15 4.500 M8 8 V15 M8 1 V8 M1 11.500 L8 8 L15 11.500" fill="none" stroke="#1f9a6a" stroke-width="1.400"/><path d="M9 15.500 L16 13 L15 11 L18 12.500 L16.500 16 L16 14.500 L9.500 16.500Z" fill="#e0442c"/></symbol>
<symbol id="i-cam" viewBox="0 0 17 17"><path d="M1 5 L12 1.500 L15 11 L4 15.500Z" fill="#fde8e4" stroke="#e0442c" stroke-width="1.200"/><path d="M3 3 L14 13" stroke="#e0442c" stroke-width="0.800"/><rect x="5" y="6" width="7" height="5" fill="#2a3aa0" stroke="#111" stroke-width="0.600"/><circle cx="8" cy="8.500" r="1.700" fill="#9ab0f0" stroke="#111" stroke-width="0.500"/><rect x="12" y="8" width="4" height="4" fill="#fff" stroke="#111" stroke-width="0.800"/></symbol>
<symbol id="i-folder" viewBox="0 0 18 15"><linearGradient id="fg" x1="0" y1="0" x2="0.300" y2="1"><stop offset="0" stop-color="#fff3b0"/><stop offset="0.500" stop-color="#fbd24a"/><stop offset="1" stop-color="#f09a1a"/></linearGradient><path d="M1 3 H6 L7.500 4.500 H14 V7 H4.500 L1 14Z" fill="#f7e9a8" stroke="#8a5a0a" stroke-width="0.900"/><path d="M4.500 7 H17.500 L14 14 H1Z" fill="url(#fg)" stroke="#8a5a0a" stroke-width="0.900"/></symbol>
<symbol id="i-warn" viewBox="0 0 12 11"><path d="M6 0.500 L11.500 10.500 H0.500Z" fill="#f7d42a" stroke="#c9a60a" stroke-width="0.600"/><path d="M6 3.500 V7.200 M6 8.300 V9.500" stroke="#111" stroke-width="1.300"/></symbol>
<symbol id="i-info" viewBox="0 0 11 11"><circle cx="5.500" cy="5.500" r="5" fill="#e8eef8" stroke="#5a6a9c" stroke-width="0.800"/><path d="M5.500 4.800 V8.500 M5.500 2.500 V3.700" stroke="#2a3a8c" stroke-width="1.400"/></symbol>
</defs></svg>
<div class="a" style="left:50px;top:226px;width:0;height:80px;border-left:1px dotted #8c8c8c"></div>
<div class="a" style="left:70px;top:313px;width:0;height:633px;border-left:1px dotted #8c8c8c"></div>
<div class="row" style="top:216px">
<div class="a" style="left:11px;top:9px;width:8px;height:0;border-top:1px dotted #8c8c8c"></div>
<svg style="left:19px;top:1px" width="17" height="17"><use href="#i-clock"/></svg>
<div class="n" style="left:39px;letter-spacing:0px">History Mode</div></div>
<div class="row" style="top:236px">
<div class="a" style="left:6px;top:5px;width:9px;height:9px;border:1px solid #bcbcbc;background:#fff"></div><div class="a" style="left:8px;top:9px;width:5px;height:1px;background:#111"></div><div class="a" style="left:10px;top:7px;width:1px;height:5px;background:#111"></div>
<div class="a" style="left:15px;top:9px;width:4px;height:0;border-top:1px dotted #8c8c8c"></div>
<svg style="left:19px;top:1px" width="18" height="17"><use href="#i-views"/></svg>
<div class="n" style="left:39px;letter-spacing:-0.1px">Model Views</div></div>
<div class="row" style="top:256px">
<div class="a" style="left:6px;top:5px;width:9px;height:9px;border:1px solid #bcbcbc;background:#fff"></div><div class="a" style="left:8px;top:9px;width:5px;height:1px;background:#111"></div><div class="a" style="left:10px;top:7px;width:1px;height:5px;background:#111"></div>
<div class="a" style="left:15px;top:9px;width:4px;height:0;border-top:1px dotted #8c8c8c"></div>
<svg style="left:21px;top:3px" width="14" height="13"><use href="#i-ok"/></svg><svg style="left:37px;top:1px" width="17" height="17"><use href="#i-cam"/></svg>
<div class="n" style="left:55px;letter-spacing:-0.3px">Cameras</div></div>
<div class="row" style="top:276px">
<div class="a" style="left:11px;top:9px;width:8px;height:0;border-top:1px dotted #8c8c8c"></div>
<svg style="left:19px;top:3px" width="18" height="15"><use href="#i-folder"/></svg><div class="a" style="left:30px;top:1px;width:6px;height:1.500px;background:#2a2a6c"></div><div class="a" style="left:30px;top:4px;width:6px;height:1.500px;background:#2a2a6c"></div>
<div class="n" style="left:39px;letter-spacing:-0.42px">User Expressions</div></div>
<div class="row" style="top:296px">
<div class="a" style="left:6px;top:5px;width:9px;height:9px;border:1px solid #bcbcbc;background:#fff"></div><div class="a" style="left:8px;top:9px;width:5px;height:1px;background:#111"></div>
<div class="a" style="left:15px;top:9px;width:4px;height:0;border-top:1px dotted #8c8c8c"></div>
<svg style="left:19px;top:3px" width="18" height="15"><use href="#i-folder"/></svg>
<div class="n" style="left:39px;letter-spacing:0.1px">Model History</div></div>
<div class="row" style="top:316px">
<div class="a" style="left:32px;top:9px;width:8px;height:0;border-top:1px dotted #8c8c8c"></div>
<svg style="left:40px;top:3px" width="13" height="13"><use href="#i-chk"/></svg>
<svg style="left:55px;top:2px" width="16" height="16"><use href="#i-csys"/></svg>
<div class="n g" style="left:74px;letter-spacing:-0.35px">Datum Coordinate System (0)</div>
<svg style="left:240px;top:3px" width="14" height="13"><use href="#i-ok"/></svg></div>
<div class="row" style="top:336px">
<div class="a" style="left:32px;top:9px;width:8px;height:0;border-top:1px dotted #8c8c8c"></div>
<svg style="left:40px;top:3px" width="13" height="13"><use href="#i-chk"/></svg>
<svg style="left:55px;top:2px" width="16" height="16"><use href="#i-conv"/></svg>
<div class="n" style="left:74px;letter-spacing:-0.35px">Convergent Body (1)</div>
<svg style="left:240px;top:3px" width="14" height="13"><use href="#i-ok"/></svg></div>
<div class="row" style="top:356px">
<div class="a" style="left:32px;top:9px;width:8px;height:0;border-top:1px dotted #8c8c8c"></div>
<svg style="left:40px;top:3px" width="13" height="13"><use href="#i-chk"/></svg>
<svg style="left:55px;top:2px" width="16" height="16"><use href="#i-sk"/></svg>
<div class="n g" style="left:74px;letter-spacing:-0.55px">Sketch (2) &quot;SKETCH_000&quot;</div>
<svg style="left:240px;top:3px" width="14" height="13"><use href="#i-ok"/></svg></div>
<div class="row" style="top:376px">
<div class="a" style="left:32px;top:9px;width:8px;height:0;border-top:1px dotted #8c8c8c"></div>
<svg style="left:40px;top:3px" width="13" height="13"><use href="#i-chk"/></svg>
<svg style="left:55px;top:2px" width="16" height="16"><use href="#i-ext"/></svg>
<div class="n" style="left:74px;letter-spacing:-0.35px">Extrude (3)</div>
<svg style="left:240px;top:3px" width="14" height="13"><use href="#i-ok"/></svg></div>
<div class="row" style="top:396px">
<div class="a" style="left:32px;top:9px;width:8px;height:0;border-top:1px dotted #8c8c8c"></div>
<svg style="left:40px;top:3px" width="13" height="13"><use href="#i-chk"/></svg>
<svg style="left:55px;top:2px" width="16" height="16"><use href="#i-ext"/></svg>
<div class="n" style="left:74px;letter-spacing:-0.35px">Extrude (4)</div>
<svg style="left:240px;top:3px" width="14" height="13"><use href="#i-ok"/></svg></div>
<div class="row" style="top:416px">
<div class="a" style="left:32px;top:9px;width:8px;height:0;border-top:1px dotted #8c8c8c"></div>
<svg style="left:40px;top:3px" width="13" height="13"><use href="#i-chk"/></svg>
<svg style="left:55px;top:2px" width="16" height="16"><use href="#i-eb"/></svg>
<div class="n" style="left:74px;letter-spacing:-0.35px">Edge Blend (5)</div>
<svg style="left:240px;top:3px" width="14" height="13"><use href="#i-ok"/></svg></div>
<div class="row" style="top:436px">
<div class="a" style="left:32px;top:9px;width:8px;height:0;border-top:1px dotted #8c8c8c"></div>
<svg style="left:40px;top:3px" width="13" height="13"><use href="#i-chk"/></svg>
<svg style="left:55px;top:2px" width="16" height="16"><use href="#i-eb"/></svg>
<div class="n" style="left:74px;letter-spacing:-0.35px">Edge Blend (6)</div>
<svg style="left:240px;top:3px" width="14" height="13"><use href="#i-ok"/></svg></div>
<div class="row" style="top:456px">
<div class="a" style="left:32px;top:9px;width:8px;height:0;border-top:1px dotted #8c8c8c"></div>
<svg style="left:44px;top:7px" width="12" height="12"><use href="#i-chk"/></svg><svg style="left:38px;top:0px" width="12" height="11"><use href="#i-warn"/></svg>
<svg style="left:55px;top:2px" width="16" height="16"><use href="#i-eb"/></svg>
<div class="n" style="left:74px;letter-spacing:-0.35px">Edge Blend (7)</div>
<svg style="left:240px;top:3px" width="14" height="13"><use href="#i-ok"/></svg></div>
<div class="row" style="top:476px">
<div class="a" style="left:32px;top:9px;width:8px;height:0;border-top:1px dotted #8c8c8c"></div>
<svg style="left:40px;top:3px" width="13" height="13"><use href="#i-chk"/></svg>
<svg style="left:55px;top:2px" width="16" height="16"><use href="#i-sk"/></svg>
<div class="n g" style="left:74px;letter-spacing:-0.55px">Sketch (8) &quot;SKETCH_001&quot;</div>
<svg style="left:240px;top:3px" width="14" height="13"><use href="#i-ok"/></svg></div>
<div class="row" style="top:496px">
<div class="a" style="left:32px;top:9px;width:8px;height:0;border-top:1px dotted #8c8c8c"></div>
<svg style="left:40px;top:3px" width="13" height="13"><use href="#i-chk"/></svg>
<svg style="left:55px;top:2px" width="16" height="16"><use href="#i-sk"/></svg>
<div class="n" style="left:74px;letter-spacing:-0.55px">Sketch (9) &quot;SKETCH_002&quot;</div>
<svg style="left:240px;top:3px" width="14" height="13"><use href="#i-ok"/></svg></div>
<div class="row" style="top:516px">
<div class="a" style="left:32px;top:9px;width:8px;height:0;border-top:1px dotted #8c8c8c"></div>
<svg style="left:40px;top:3px" width="13" height="13"><use href="#i-chk"/></svg>
<svg style="left:55px;top:2px" width="16" height="16"><use href="#i-ext"/></svg>
<div class="n" style="left:74px;letter-spacing:-0.35px">Extrude (10)</div>
<svg style="left:240px;top:3px" width="14" height="13"><use href="#i-ok"/></svg></div>
<div class="row" style="top:536px">
<div class="a" style="left:32px;top:9px;width:8px;height:0;border-top:1px dotted #8c8c8c"></div>
<svg style="left:40px;top:3px" width="13" height="13"><use href="#i-chk"/></svg>
<svg style="left:55px;top:2px" width="16" height="16"><use href="#i-rf"/></svg>
<div class="n" style="left:74px;letter-spacing:-0.35px">Replace Face (11)</div>
<svg style="left:240px;top:3px" width="14" height="13"><use href="#i-ok"/></svg></div>
<div class="row" style="top:556px">
<div class="a" style="left:32px;top:9px;width:8px;height:0;border-top:1px dotted #8c8c8c"></div>
<svg style="left:40px;top:3px" width="13" height="13"><use href="#i-chk"/></svg>
<svg style="left:55px;top:2px" width="16" height="16"><use href="#i-ext"/></svg>
<div class="n" style="left:74px;letter-spacing:-0.35px">Extrude (12)</div>
<svg style="left:240px;top:3px" width="14" height="13"><use href="#i-ok"/></svg></div>
<div class="row" style="top:576px">
<div class="a" style="left:32px;top:9px;width:8px;height:0;border-top:1px dotted #8c8c8c"></div>
<svg style="left:40px;top:3px" width="13" height="13"><use href="#i-chk"/></svg>
<svg style="left:55px;top:2px" width="16" height="16"><use href="#i-hole"/></svg>
<div class="n" style="left:74px;letter-spacing:-0.35px">Simple Hole (13)</div>
<svg style="left:240px;top:3px" width="14" height="13"><use href="#i-ok"/></svg></div>
<div class="row" style="top:596px">
<div class="a" style="left:32px;top:9px;width:8px;height:0;border-top:1px dotted #8c8c8c"></div>
<svg style="left:40px;top:3px" width="13" height="13"><use href="#i-chk"/></svg>
<svg style="left:55px;top:2px" width="16" height="16"><use href="#i-sk"/></svg>
<div class="n g" style="left:74px;letter-spacing:-0.55px">Sketch (14) &quot;SKETCH_003&quot;</div>
<svg style="left:240px;top:3px" width="14" height="13"><use href="#i-ok"/></svg></div>
<div class="row" style="top:616px">
<div class="a" style="left:32px;top:9px;width:8px;height:0;border-top:1px dotted #8c8c8c"></div>
<svg style="left:40px;top:3px" width="13" height="13"><use href="#i-chk"/></svg>
<svg style="left:55px;top:2px" width="16" height="16"><use href="#i-ext"/></svg>
<div class="n" style="left:74px;letter-spacing:-0.35px">Extrude (15)</div>
<svg style="left:240px;top:3px" width="14" height="13"><use href="#i-ok"/></svg></div>
<div class="row" style="top:636px">
<div class="a" style="left:32px;top:9px;width:8px;height:0;border-top:1px dotted #8c8c8c"></div>
<svg style="left:40px;top:3px" width="13" height="13"><use href="#i-chk"/></svg>
<svg style="left:55px;top:2px" width="16" height="16"><use href="#i-cop"/></svg>
<div class="n" style="left:74px;letter-spacing:-0.35px">Coplanar (16)</div>
<svg style="left:240px;top:3px" width="14" height="13"><use href="#i-ok"/></svg></div>
<div class="row" style="top:656px">
<div class="a" style="left:32px;top:9px;width:8px;height:0;border-top:1px dotted #8c8c8c"></div>
<svg style="left:40px;top:3px" width="13" height="13"><use href="#i-chk"/></svg>
<svg style="left:55px;top:2px" width="16" height="16"><use href="#i-line"/></svg>
<div class="n g" style="left:74px;letter-spacing:-0.35px">Line (17)</div>
<svg style="left:240px;top:3px" width="14" height="13"><use href="#i-ok"/></svg></div>
<div class="row" style="top:676px">
<div class="a" style="left:32px;top:9px;width:8px;height:0;border-top:1px dotted #8c8c8c"></div>
<svg style="left:40px;top:3px" width="13" height="13"><use href="#i-chk"/></svg>
<svg style="left:55px;top:2px" width="16" height="16"><use href="#i-ext"/></svg>
<div class="n" style="left:74px;letter-spacing:-0.35px">Extrude (18)</div>
<svg style="left:240px;top:3px" width="14" height="13"><use href="#i-ok"/></svg></div>
<div class="row" style="top:696px">
<div class="a" style="left:32px;top:9px;width:8px;height:0;border-top:1px dotted #8c8c8c"></div>
<svg style="left:40px;top:3px" width="13" height="13"><use href="#i-chk"/></svg>
<svg style="left:55px;top:2px" width="16" height="16"><use href="#i-rf"/></svg>
<div class="n" style="left:74px;letter-spacing:-0.35px">Replace Face (19)</div>
<svg style="left:240px;top:3px" width="14" height="13"><use href="#i-ok"/></svg></div>
<div class="row" style="top:716px">
<div class="a" style="left:32px;top:9px;width:8px;height:0;border-top:1px dotted #8c8c8c"></div>
<svg style="left:40px;top:3px" width="13" height="13"><use href="#i-chk"/></svg>
<svg style="left:55px;top:2px" width="16" height="16"><use href="#i-mf"/></svg>
<div class="n" style="left:74px;letter-spacing:-0.35px">Move Face (20)</div>
<svg style="left:240px;top:3px" width="14" height="13"><use href="#i-ok"/></svg></div>
<div class="row" style="top:736px">
<div class="a" style="left:32px;top:9px;width:8px;height:0;border-top:1px dotted #8c8c8c"></div>
<svg style="left:44px;top:7px" width="12" height="12"><use href="#i-chk"/></svg><svg style="left:39px;top:0px" width="11" height="11"><use href="#i-info"/></svg>
<svg style="left:55px;top:2px" width="16" height="16"><use href="#i-rf"/></svg>
<div class="n" style="left:74px;letter-spacing:-0.35px">Replace Face (21)</div>
<svg style="left:240px;top:3px" width="14" height="13"><use href="#i-ok"/></svg></div>
<div class="row" style="top:756px">
<div class="a" style="left:32px;top:9px;width:8px;height:0;border-top:1px dotted #8c8c8c"></div>
<svg style="left:40px;top:3px" width="13" height="13"><use href="#i-chk"/></svg>
<svg style="left:55px;top:2px" width="16" height="16"><use href="#i-uni"/></svg>
<div class="n" style="left:74px;letter-spacing:-0.35px">Unite (22)</div>
<svg style="left:240px;top:3px" width="14" height="13"><use href="#i-ok"/></svg></div>
<div class="row" style="top:776px">
<div class="a" style="left:32px;top:9px;width:8px;height:0;border-top:1px dotted #8c8c8c"></div>
<svg style="left:40px;top:3px" width="13" height="13"><use href="#i-chk"/></svg>
<svg style="left:55px;top:2px" width="16" height="16"><use href="#i-eb"/></svg>
<div class="n" style="left:74px;letter-spacing:-0.35px">Edge Blend (23)</div>
<svg style="left:240px;top:3px" width="14" height="13"><use href="#i-ok"/></svg></div>
<div class="row" style="top:796px">
<div class="a" style="left:32px;top:9px;width:8px;height:0;border-top:1px dotted #8c8c8c"></div>
<svg style="left:40px;top:3px" width="13" height="13"><use href="#i-chk"/></svg>
<svg style="left:55px;top:2px" width="16" height="16"><use href="#i-eb"/></svg>
<div class="n" style="left:74px;letter-spacing:-0.35px">Edge Blend (24)</div>
<svg style="left:240px;top:3px" width="14" height="13"><use href="#i-ok"/></svg></div>
<div class="row" style="top:816px">
<div class="a" style="left:32px;top:9px;width:8px;height:0;border-top:1px dotted #8c8c8c"></div>
<svg style="left:40px;top:3px" width="13" height="13"><use href="#i-chk"/></svg>
<svg style="left:55px;top:2px" width="16" height="16"><use href="#i-xf"/></svg>
<div class="n" style="left:74px;letter-spacing:-0.35px">X-Form (25)</div>
<svg style="left:240px;top:3px" width="14" height="13"><use href="#i-ok"/></svg></div>
<div class="row" style="top:836px">
<div class="a" style="left:32px;top:9px;width:8px;height:0;border-top:1px dotted #8c8c8c"></div>
<svg style="left:40px;top:3px" width="13" height="13"><use href="#i-chk"/></svg>
<svg style="left:55px;top:2px" width="16" height="16"><use href="#i-rf"/></svg>
<div class="n" style="left:74px;letter-spacing:-0.35px">Replace Face (26)</div>
<svg style="left:240px;top:3px" width="14" height="13"><use href="#i-ok"/></svg></div>
<div class="row" style="top:856px">
<div class="a" style="left:32px;top:9px;width:8px;height:0;border-top:1px dotted #8c8c8c"></div>
<svg style="left:40px;top:3px" width="13" height="13"><use href="#i-chk"/></svg>
<svg style="left:55px;top:2px" width="16" height="16"><use href="#i-rf"/></svg>
<div class="n" style="left:74px;letter-spacing:-0.35px">Replace Face (27)</div>
<svg style="left:240px;top:3px" width="14" height="13"><use href="#i-ok"/></svg></div>
<div class="row" style="top:876px">
<div class="a" style="left:32px;top:9px;width:8px;height:0;border-top:1px dotted #8c8c8c"></div>
<svg style="left:40px;top:3px" width="13" height="13"><use href="#i-chk"/></svg>
<svg style="left:55px;top:2px" width="16" height="16"><use href="#i-sk"/></svg>
<div class="n g" style="left:74px;letter-spacing:-0.55px">Sketch (28) &quot;SKETCH_004&quot;</div>
<svg style="left:240px;top:3px" width="14" height="13"><use href="#i-ok"/></svg></div>
<div class="row" style="top:896px">
<div class="a" style="left:32px;top:9px;width:8px;height:0;border-top:1px dotted #8c8c8c"></div>
<svg style="left:40px;top:3px" width="13" height="13"><use href="#i-chk"/></svg>
<svg style="left:55px;top:2px" width="16" height="16"><use href="#i-ext"/></svg>
<div class="n" style="left:74px;letter-spacing:-0.35px">Extrude (29)</div>
<svg style="left:240px;top:3px" width="14" height="13"><use href="#i-ok"/></svg></div>
<div class="row" style="top:916px">
<div class="a" style="left:32px;top:9px;width:8px;height:0;border-top:1px dotted #8c8c8c"></div>
<svg style="left:40px;top:3px" width="13" height="13"><use href="#i-chk"/></svg>
<svg style="left:55px;top:2px" width="16" height="16"><use href="#i-mf"/></svg>
<div class="n" style="left:74px;letter-spacing:-0.35px">Move Face (30)</div>
<svg style="left:240px;top:3px" width="14" height="13"><use href="#i-ok"/></svg></div>
<div class="row" style="top:936px">
<div class="a" style="left:32px;top:9px;width:8px;height:0;border-top:1px dotted #8c8c8c"></div>
<svg style="left:40px;top:3px" width="13" height="13"><use href="#i-chk"/></svg>
<svg style="left:55px;top:2px" width="16" height="16"><use href="#i-mf"/></svg>
<div class="n" style="left:74px;letter-spacing:-0.35px">Move Face (31)</div>
<svg style="left:240px;top:3px" width="14" height="13"><use href="#i-ok"/></svg></div>
<div class="a" style="left:313px;top:216px;width:17px;height:740px;background:#f0f1f1;border-left:1px solid #e2e4e4"></div>
<div class="a" style="left:317px;top:223px;width:0;height:0;border-left:4px solid transparent;border-right:4px solid transparent;border-bottom:4px solid #333"></div>
<div class="a" style="left:314px;top:234px;width:14px;height:536px;background:linear-gradient(90deg,#f2f2f2,#d9d9d9 45%,#c4c4c4);border:1px solid #9a9a9a;border-radius:2px"></div>
<div class="a" style="left:318px;top:498px;width:7px;height:1px;background:#555;box-shadow:0 2px 0 #555,0 4px 0 #555"></div>
<div class="a" style="left:317px;top:944px;width:0;height:0;border-left:4px solid transparent;border-right:4px solid transparent;border-top:4px solid #333"></div>
<div class="a" style="left:41px;top:956px;width:272px;height:15px;background:#f0f1f1"></div>
<div class="a" style="left:47px;top:959px;width:0;height:0;border-top:4px solid transparent;border-bottom:4px solid transparent;border-right:4px solid #333"></div>
<div class="a" style="left:59px;top:957px;width:111px;height:13px;background:linear-gradient(#f4f4f4,#dcdcdc 45%,#c6c6c6);border:1px solid #9a9a9a;border-radius:2px"></div>
<div class="a" style="left:111px;top:960px;width:1px;height:7px;background:#555;box-shadow:2px 0 0 #555,4px 0 0 #555"></div>
<div class="a" style="left:301px;top:959px;width:0;height:0;border-top:4px solid transparent;border-bottom:4px solid transparent;border-left:4px solid #333"></div>
<div class="a" style="left:40px;top:973px;width:291px;height:5px;background:#b9bbbb;border:1px solid #9c9e9e"></div>

<div class="t" style="left:46px;top:983px;font-size:13.300px;line-height:16px;height:16px;color:#17647f">Dependencies</div>
<svg style="left:314px;top:986px" width="11" height="9" viewBox="0 0 11 9"><path d="M1 1 L5.500 8 L10 1" fill="none" stroke="#17647f" stroke-width="1.800"/></svg>
<div class="a" style="left:40px;top:1002px;width:291px;height:2px;background:#cfd1d1"></div>
<div class="t" style="left:46px;top:1007px;font-size:13.300px;line-height:16px;height:16px;color:#17647f">Details</div>
<svg style="left:314px;top:1010px" width="11" height="9" viewBox="0 0 11 9"><path d="M1 1 L5.500 8 L10 1" fill="none" stroke="#17647f" stroke-width="1.800"/></svg>
<div class="a" style="left:40px;top:1026px;width:291px;height:2px;background:#cfd1d1"></div>
<div class="t" style="left:46px;top:1030.5px;font-size:13.300px;line-height:16px;height:16px;color:#17647f">Preview</div>
<svg style="left:314px;top:1033.5px" width="11" height="9" viewBox="0 0 11 9"><path d="M1 1 L5.500 8 L10 1" fill="none" stroke="#17647f" stroke-width="1.800"/></svg>
<div class="a" style="left:40px;top:1049.5px;width:291px;height:2px;background:#cfd1d1"></div>
<!-- resource bar icons -->
<svg style="left:8px;top:171px" width="17" height="17" viewBox="0 0 17 17"><circle cx="8.500" cy="8.500" r="4.600" fill="none" stroke="#222" stroke-width="1.800"/><g stroke="#222" stroke-width="2"><path d="M8.500 0.500 V3 M8.500 14 V16.500 M0.500 8.500 H3 M14 8.500 H16.500 M2.800 2.800 L4.600 4.600 M12.400 12.400 L14.200 14.200 M2.800 14.200 L4.600 12.400 M12.400 4.600 L14.200 2.800"/></g></svg>
<svg style="left:7px;top:214px" width="24" height="30" viewBox="0 0 24 30"><g fill="#f7cf3a" stroke="#b98a0a" stroke-width="0.700"><path d="M1 5 L5 3 L9 5 V10 L5 12 L1 10Z"/><path d="M5 10 L9 8 L13 10 V15 L9 17 L5 15Z"/><path d="M4 1 L8 -1 L12 1 V6 L8 8 L4 6Z" transform="translate(0,2)"/><path d="M13 20 L17 18 L21 20 V25 L17 27 L13 25Z"/></g><path d="M5 17 V27 M5 22.500 H11 M15 12.500 H23" stroke="#1a2a8c" stroke-width="1.400" fill="none"/></svg>
<svg style="left:8px;top:257px" width="24" height="30" viewBox="0 0 24 30"><path d="M2 2 L10 8.500 L2 15Z M22 2 L14 8.500 L22 15Z" fill="#1a3aa8"/><path d="M12 1 V29" stroke="#111" stroke-width="1.200" stroke-dasharray="2.500 1.500"/><rect x="1" y="18" width="9" height="9" fill="#f7e03a" stroke="#8a7a0a" stroke-width="0.800"/><path d="M14 28 V17 L23 28Z" fill="#e0342c" stroke="#8a1a1a" stroke-width="0.600"/></svg>
<svg style="left:7.500px;top:302px" width="22" height="27" viewBox="0 0 24 30"><path d="M1.500 4 V12 C1.500 14.500 11.500 14.500 11.500 12 V4" fill="#d06a9c" stroke="#7a1a4c" stroke-width="0.900"/><ellipse cx="6.500" cy="4" rx="5" ry="2.500" fill="#eeb0cc" stroke="#7a1a4c" stroke-width="0.900"/><path d="M5 16 V28 M5 22.500 H11 M15 10.500 H23" stroke="#1a2a8c" stroke-width="1.400" fill="none"/><circle cx="17" cy="22.500" r="4.500" fill="#fff" stroke="#a02a5c" stroke-width="1.300"/><circle cx="17" cy="22.500" r="1.800" fill="#a02a5c"/></svg>
<svg style="left:6px;top:345px" width="24" height="25" viewBox="0 0 28 27"><path d="M1 9 L6 3 L10 5 V24 L2 26Z" fill="#f08a2a" stroke="#9a4a0a" stroke-width="0.700"/><path d="M10 8 L15 2 L19 4 V23 L10 25Z" fill="#2a9a3a" stroke="#0a5a1a" stroke-width="0.700"/><path d="M19 7 L24 2 L27 4 V22 L19 24Z" fill="#2a6ac8" stroke="#0a2a7a" stroke-width="0.700"/><path d="M1 9 L6 3 L8 4 L3 10Z M10 8 L15 2 L17 3 L12 9Z M19 7 L24 2 L26 3 L21 8Z" fill="#fff" opacity="0.800"/></svg>
<svg style="left:6px;top:397px" width="25" height="26" viewBox="0 0 29 30"><path d="M8 9 C14 3 23 6 25 15 M10 4 C18 -2 28 4 28 15" fill="none" stroke="#1a4aa8" stroke-width="3"/><circle cx="9" cy="20" r="8" fill="#1a5ac8" stroke="#0a2a7a" stroke-width="0.800"/><path d="M9 18 V25 M9 14 V16" stroke="#fff" stroke-width="2.600"/></svg>
<svg style="left:9px;top:452px" width="21" height="26" viewBox="0 0 21 26"><path d="M1 1 H14 L20 7 V25 H1Z" fill="#fff" stroke="#2a5aa8" stroke-width="1.400"/><path d="M14 1 V7 H20" fill="#dfe8f8" stroke="#2a5aa8" stroke-width="1"/><circle cx="10" cy="16" r="6" fill="#2a7ad0"/><path d="M6 14 C8 11 11 13 10 16 C9 19 13 19 14 16 C15 14 13 12 14 11" fill="#3aa84a" stroke="#1a7a2a" stroke-width="0.500"/></svg>
<svg style="left:5px;top:505px" width="27" height="27" viewBox="0 0 27 27"><defs><radialGradient id="ck" cx="0.400" cy="0.350" r="0.700"><stop offset="0" stop-color="#fff"/><stop offset="1" stop-color="#c4d0e4"/></radialGradient></defs><circle cx="13.500" cy="13.500" r="12.500" fill="#8a96a8" stroke="#4a5468" stroke-width="1"/><circle cx="13.500" cy="13.500" r="10" fill="url(#ck)" stroke="#5a6478" stroke-width="0.800"/><path d="M13.500 5 V14 H20" stroke="#111" stroke-width="2" fill="none"/></svg>
<svg style="left:7px;top:546px" width="24" height="30" viewBox="0 0 24 30"><defs><linearGradient id="rb" x1="0" y1="0" x2="0" y2="1"><stop offset="0" stop-color="#e0342c"/><stop offset="0.250" stop-color="#f7a02a"/><stop offset="0.450" stop-color="#f4e83a"/><stop offset="0.650" stop-color="#2aa84a"/><stop offset="0.850" stop-color="#2a6ad0"/><stop offset="1" stop-color="#3a2a9c"/></linearGradient></defs><rect x="1" y="3" width="9" height="24" fill="url(#rb)"/><path d="M11 7 L14 5 L22 24 L20 26Z" fill="#111"/><path d="M9 2 L12 4 L15 2 L13.500 5.500 L16 8 L12.500 7.500 L11 10 L10.500 6.500 L7.500 5.500Z" fill="#fff" stroke="#ddd" stroke-width="0.400"/></svg>
<svg style="left:6px;top:588px" width="27" height="30" viewBox="0 0 27 30"><path d="M2 3 H9 V20 L5.500 25 L2 20Z" fill="#2a7ad0" stroke="#0a3a8a" stroke-width="0.700"/><path d="M2 7 L9 5 M2 11 L9 9 M2 15 L9 13 M2 19 L9 17" stroke="#9ac8f6" stroke-width="1"/><path d="M1 24 L5.500 22 L10 24 L5.500 28Z" fill="#f4d83a"/><path d="M12 9 H25 L18 15 H24 M14 9 L17 22" stroke="#1a3a9c" stroke-width="1.800" fill="none"/><path d="M13 10 L16 8 L23 25 L21 27Z" fill="#111"/></svg>
<svg style="left:6px;top:628px" width="28" height="30" viewBox="0 0 28 30"><path d="M9 6 L20 2 L25 5 L24 8 L20 6 L14 9 L18 24 L15 25 L11 10 L9 10Z" fill="#c8ccd4" stroke="#4a505c" stroke-width="0.900"/><path d="M4 14 C1 17 4 21 8 20 L16 26 C18 28 21 25 19 23 L11 17 C12 13 8 11 5 12 L8 15 L6 17Z" fill="#9aa4b8" stroke="#3a4458" stroke-width="0.800"/><ellipse cx="7" cy="26" rx="5" ry="2.500" fill="#f08a2a"/></svg>
<svg style="left:6px;top:672px" width="27" height="28" viewBox="0 0 27 28"><path d="M2 5 L8 2 V24 L2 27Z" fill="#f4f4f4" stroke="#333" stroke-width="1.200"/><rect x="8" y="2" width="17" height="20" fill="#fff" stroke="#333" stroke-width="1.200"/><rect x="10.500" y="4.500" width="12" height="9" fill="#e0342c"/><path d="M12 6 L16.500 12 L21 6Z" fill="#2a4ac8"/><rect x="10.500" y="13.500" width="12" height="6" fill="#f7c86a"/></svg>
<svg style="left:6px;top:713px" width="27" height="28" viewBox="0 0 27 28"><path d="M2 5 L8 2 V24 L2 27Z" fill="#f4f4f4" stroke="#333" stroke-width="1.200"/><rect x="8" y="2" width="17" height="22" fill="#fff" stroke="#333" stroke-width="1.200"/><circle cx="12.500" cy="7" r="2.200" fill="#2a4ac8"/><circle cx="12.500" cy="13" r="2.200" fill="#2a9a3a"/><circle cx="12.500" cy="19" r="2.200" fill="#e0342c"/><path d="M16.500 7 H22.500 M16.500 13 H22.500 M16.500 19 H22.500" stroke="#222" stroke-width="1.400"/></svg>
<!-- 3D model -->
<svg id="model" style="left:0;top:0" width="1482" height="1075" viewBox="0 0 1482 1075">
<defs>
<filter id="b3" filterUnits="userSpaceOnUse" x="300" y="150" width="1000" height="925"><feGaussianBlur stdDeviation="3"/></filter>
<filter id="b6" filterUnits="userSpaceOnUse" x="300" y="150" width="1000" height="925"><feGaussianBlur stdDeviation="6"/></filter>
<filter id="b10" filterUnits="userSpaceOnUse" x="300" y="150" width="1000" height="925"><feGaussianBlur stdDeviation="10"/></filter>
<filter id="b16" filterUnits="userSpaceOnUse" x="300" y="150" width="1000" height="925"><feGaussianBlur stdDeviation="16"/></filter>
<filter id="b1" filterUnits="userSpaceOnUse" x="300" y="150" width="1000" height="925"><feGaussianBlur stdDeviation="1"/></filter>
<path id="boneP" d="M652,371 C640,372 610,380 596,387 C584,392 570,405 565,418 C561,430 564,445 569,455 C574,466 585,480 587,490 C589,505 585,520 587,535 C589,548 593,558 595,583 C597,597 603,608 620,627 C630,637 648,650 657,660 C664,668 668,678 671,684 L687,713 C693,724 697,734 700,743 C705,756 708,764 710,773 C713,785 715,796 717,807 L723,847 C725,860 726,870 727,880 L728,913 L730,935 C731,948 732,955 733,962 C734,970 736,975 739,979 C742,984 745,986 750,988 C757,992 764,995 771,997 C782,1001 793,1004 804,1006 C815,1008 826,1010 838,1010 C850,1010 862,1009 873,1008 C884,1006 895,1004 905,1001 L937,993 L948,989 C952,986 955,982 957,978 C958,974 958,971 960,968 C963,964 967,962 970,960 C973,958 976,957 975,953 C974,949 972,946 971,941 C970,934 970,928 970,922 C971,914 973,906 977,900 L983,867 L990,833 L994,806 L1010,770 L1010,600 L900,480 L760,400 L700,372 L652,364 Z"/>
<clipPath id="boneC"><use href="#boneP"/></clipPath>
<path id="lobeP" d="M921,246 C912,246 906,248 900,250 C890,253 881,257 873,262 C864,267 856,273 850,280 C843,287 838,295 835,303 C831,312 829,321 827,330 C824,339 822,348 822,357 C821,364 821,371 822,377 C823,384 824,390 828,396 L840,400 L870,392 L905,372 L940,342 L965,314 L984,288 L990,268 L980,254 L962,246 L940,243 Z"/>
<clipPath id="lobeC"><use href="#lobeP"/></clipPath>
<linearGradient id="boneG" x1="560" y1="0" x2="1000" y2="0" gradientUnits="userSpaceOnUse"><stop offset="0" stop-color="#b62b34"/><stop offset="0.300" stop-color="#c23038"/><stop offset="0.600" stop-color="#ac2731"/><stop offset="1" stop-color="#861c27"/></linearGradient>
<linearGradient id="boneV" x1="0" y1="370" x2="0" y2="1010" gradientUnits="userSpaceOnUse"><stop offset="0" stop-color="#e04a4a" stop-opacity="0.300"/><stop offset="0.400" stop-color="#c8323a" stop-opacity="0"/><stop offset="0.700" stop-color="#7a1822" stop-opacity="0.350"/><stop offset="1" stop-color="#7a1822" stop-opacity="0.500"/></linearGradient>
<!-- guide top surface -->
<path id="topP" d="M653,354 L683,360 L700,366 L738,374 C750,380 760,384 773,389 C785,393 796,396 807,397 C815,398 823,397 830,396 C840,394 850,391 867,385 C880,380 890,374 900,367 C912,359 923,350 933,340 C943,331 952,322 960,313 C968,304 975,295 980,287 C984,281 986,275 985,270 C984,265 981,261 977,258 L985,240 L1012,245 C1020,250 1027,255 1033,260 C1041,267 1047,273 1053,280 C1061,290 1067,300 1073,310 C1079,320 1085,330 1090,340 C1096,352 1102,364 1107,377 L1120,410 L1133,447 L1140,467 L1139,483 L845,539 L840.0,529.5 L835.8,525.8 L824.0,508.5 L812.0,491.5 L800.0,474.0 L786.0,456.0 L775.0,444.5 L764.0,432.8 L752.0,419.5 L740.0,406.3 L728.7,396.2 L714.8,385.1 L700.8,373.9 L686.9,366.9 L672.9,362.0 L655.5,357.9 L653,354 Z"/>
<clipPath id="topC"><use href="#topP"/></clipPath>
<linearGradient id="topG" x1="650" y1="0" x2="1140" y2="0" gradientUnits="userSpaceOnUse"><stop offset="0" stop-color="#5f7479"/><stop offset="0.180" stop-color="#6f868b"/><stop offset="0.300" stop-color="#a9c3c9"/><stop offset="0.400" stop-color="#e4f3f6"/><stop offset="0.480" stop-color="#ffffff"/><stop offset="0.780" stop-color="#ffffff"/><stop offset="0.850" stop-color="#d2eaef"/><stop offset="0.920" stop-color="#8fa6ac"/><stop offset="1" stop-color="#72888d"/></linearGradient>
<linearGradient id="cylH" x1="0" y1="0" x2="1" y2="0"><stop offset="0" stop-color="#4a5b5f"/><stop offset="0.280" stop-color="#b9c9cc"/><stop offset="0.450" stop-color="#dfe9eb"/><stop offset="0.700" stop-color="#8da1a5"/><stop offset="1" stop-color="#55676b"/></linearGradient>
<linearGradient id="stemSide" x1="888" y1="0" x2="950" y2="0" gradientUnits="userSpaceOnUse"><stop offset="0" stop-color="#3e4e52"/><stop offset="0.300" stop-color="#73888c"/><stop offset="0.480" stop-color="#8a9fa3"/><stop offset="0.800" stop-color="#62767a"/><stop offset="1" stop-color="#586b6f"/></linearGradient>
<linearGradient id="neckG" x1="914" y1="0" x2="966" y2="0" gradientUnits="userSpaceOnUse"><stop offset="0" stop-color="#4a5b5f"/><stop offset="0.350" stop-color="#8ea3a7"/><stop offset="0.550" stop-color="#a3b6ba"/><stop offset="0.800" stop-color="#62767a"/><stop offset="1" stop-color="#4a5b5f"/></linearGradient>
<linearGradient id="stemF" x1="960" y1="600" x2="1040" y2="800" gradientUnits="userSpaceOnUse"><stop offset="0" stop-color="#435357"/><stop offset="1" stop-color="#4e6064"/></linearGradient>
<linearGradient id="barF" x1="0" y1="540" x2="0" y2="620" gradientUnits="userSpaceOnUse"><stop offset="0" stop-color="#54686c"/><stop offset="1" stop-color="#45575b"/></linearGradient>
<linearGradient id="endF" x1="820" y1="0" x2="874" y2="0" gradientUnits="userSpaceOnUse"><stop offset="0" stop-color="#2f3d40"/><stop offset="0.500" stop-color="#4c5e62"/><stop offset="0.850" stop-color="#9db0b4"/><stop offset="1" stop-color="#c4d2d5"/></linearGradient>
<linearGradient id="bandG" x1="650" y1="360" x2="860" y2="610" gradientUnits="userSpaceOnUse"><stop offset="0" stop-color="#3d4d51"/><stop offset="0.200" stop-color="#2e3c3f"/><stop offset="0.700" stop-color="#232e30"/><stop offset="1" stop-color="#283437"/></linearGradient>
<linearGradient id="lugL" x1="925" y1="622" x2="905" y2="692" gradientUnits="userSpaceOnUse"><stop offset="0" stop-color="#4f6165"/><stop offset="0.250" stop-color="#cfdcde"/><stop offset="0.450" stop-color="#eef4f5"/><stop offset="0.700" stop-color="#9db1b5"/><stop offset="1" stop-color="#44565a"/></linearGradient>
<linearGradient id="lugR" x1="1125" y1="592" x2="1088" y2="664" gradientUnits="userSpaceOnUse"><stop offset="0" stop-color="#4f6165"/><stop offset="0.250" stop-color="#cfdcde"/><stop offset="0.450" stop-color="#eef4f5"/><stop offset="0.700" stop-color="#9db1b5"/><stop offset="1" stop-color="#44565a"/></linearGradient>
<radialGradient id="discG" cx="0.400" cy="0.400" r="0.650"><stop offset="0" stop-color="#8fa4a8"/><stop offset="0.700" stop-color="#6f858a"/><stop offset="1" stop-color="#55686c"/></radialGradient>
</defs>

<!-- back lobe of bone -->
<use href="#lobeP" fill="#c43238"/>
<g clip-path="url(#lobeC)">
 <ellipse cx="915" cy="305" rx="52" ry="30" fill="#e45856" filter="url(#b10)" transform="rotate(-38 915 305)"/>
 <ellipse cx="945" cy="300" rx="26" ry="16" fill="#e25553" filter="url(#b6)" transform="rotate(-40 945 300)"/>
 <path d="M850,283 C838,300 830,330 830,360" stroke="#d8444a" stroke-width="8" fill="none" filter="url(#b6)" opacity="0.600"/>
 <path d="M921,246 C900,252 875,262 850,282" stroke="#a8262e" stroke-width="7" fill="none" filter="url(#b3)" opacity="0.700"/>
 <path d="M821,345 C826,322 845,305 858,302 C868,315 879,345 879,370 C879,380 871,386 865,390 L826,399 C820,385 819,365 821,345 Z" fill="#6f151e" filter="url(#b3)"/>
 <ellipse cx="845" cy="368" rx="12" ry="20" fill="#a3252e" filter="url(#b6)" transform="rotate(8 845 368)"/>
 <path d="M860,303 C872,320 882,345 881,372" stroke="#5a0f18" stroke-width="3" fill="none" filter="url(#b1)"/>
 <path d="M965,250 C985,262 985,285 960,315" stroke="#a8262e" stroke-width="8" fill="none" filter="url(#b3)"/>
</g>

<!-- main bone -->
<use href="#boneP" fill="url(#boneG)"/>
<use href="#boneP" fill="url(#boneV)"/>
<g clip-path="url(#boneC)">
 <!-- left lobe highlights -->
 <ellipse cx="716" cy="486" rx="88" ry="17" fill="#e85e5c" filter="url(#b10)" transform="rotate(42 716 486)"/>
 <ellipse cx="690" cy="452" rx="45" ry="22" fill="#dc4c4c" filter="url(#b16)" transform="rotate(42 690 452)"/>
 <ellipse cx="612" cy="440" rx="34" ry="18" fill="#d84648" filter="url(#b16)"/>
 <path d="M564,420 C572,400 600,384 652,371" stroke="#8e1f28" stroke-width="9" fill="none" filter="url(#b3)" opacity="0.800"/><path d="M568,420 C590,421 618,432 642,454" stroke="#861c25" stroke-width="11" fill="none" filter="url(#b6)" opacity="0.850"/><path d="M580,402 C600,398 625,402 650,415" stroke="#e4504f" stroke-width="7" fill="none" filter="url(#b3)" opacity="0.800"/>
 <path d="M572,470 C590,500 585,540 597,585" stroke="#9a232d" stroke-width="16" fill="none" filter="url(#b6)"/>
 <path d="M575,470 L660,475 L700,540 L640,600 L595,570 Z" fill="#98222c" filter="url(#b16)" opacity="0.650"/>
 <path d="M640,470 C690,505 735,540 775,575" stroke="#b82c35" stroke-width="10" fill="none" filter="url(#b6)" opacity="0.800"/>
 <ellipse cx="756" cy="590" rx="55" ry="24" fill="#e0464a" filter="url(#b16)" transform="rotate(20 756 590)"/>
 <path d="M600,580 C640,630 690,660 740,700" stroke="#b62a34" stroke-width="26" fill="none" filter="url(#b16)" opacity="0.800"/>
 <ellipse cx="830" cy="640" rx="36" ry="36" fill="#d8403f" filter="url(#b16)"/>
 <!-- shaft shading -->
 <path d="M600,585 C640,612 672,645 694,695 C710,735 722,780 730,840 C734,880 736,930 740,990" stroke="#8a1e28" stroke-width="34" fill="none" filter="url(#b10)" opacity="0.750"/>
 <path d="M680,562 C740,585 820,620 890,652" stroke="#dc4246" stroke-width="26" fill="none" filter="url(#b16)" opacity="0.900"/>
 <path d="M740,760 L730,1000 L790,1010 L780,760Z" fill="#b52a34" filter="url(#b10)"/>
 <path d="M850,760 C852,800 848,850 851,900 C852,940 850,970 850,1005" stroke="#7d1a24" stroke-width="18" fill="none" filter="url(#b10)" opacity="0.750"/>
 <path d="M900,800 L890,1005 L990,1000 L1000,800Z" fill="#7d1a24" filter="url(#b16)" opacity="0.600"/>
 <path d="M860,610 C880,650 890,720 885,800" stroke="#9c222c" stroke-width="30" fill="none" filter="url(#b10)" opacity="0.700"/>
 <ellipse cx="810" cy="829" rx="13" ry="8" fill="#d8484e" filter="url(#b3)" transform="rotate(25 810 829)"/><ellipse cx="806" cy="842" rx="14" ry="5" fill="#7d1a24" filter="url(#b3)" transform="rotate(25 806 842)" opacity="0.700"/>
 <ellipse cx="855" cy="705" rx="8" ry="34" fill="#851a24" filter="url(#b6)" transform="rotate(-8 855 705)" opacity="0.850"/><ellipse cx="856" cy="684" rx="7" ry="6" fill="#6d141d" filter="url(#b3)" opacity="0.800"/><ellipse cx="840" cy="655" rx="40" ry="14" fill="#e24a4a" filter="url(#b10)"/>
 <path d="M740,985 C790,1002 880,1005 950,985" stroke="#7a1822" stroke-width="10" fill="none" filter="url(#b6)"/>
 <path d="M960,960 L972,950 L965,975 L950,990Z" fill="#ea4a48"/>
</g>

<!-- right arm band (behind, top) -->
<path d="M919.500,240.500 L923.700,236.900 L963.200,226.800 L975,235 L990,252 L975.300,255.700 L964.400,249 L951,241.800 L936.400,237.500 L920.600,238.100 Z" fill="#5f7479"/>
<path d="M920,239.500 L963.200,227.300" stroke="#c9d8db" stroke-width="1.300" fill="none"/>
<!-- top saddle surface -->
<use href="#topP" fill="#ffffff"/>
<g clip-path="url(#topC)">
 <rect x="640" y="220" width="520" height="330" fill="#ffffff"/>
 <path d="M640,340 L739,372 L771,389 L808,394.500 L846,397 L852,415 L834,442 L814,462 L800,470 L850,545 L640,400Z" fill="#677d82" filter="url(#b10)"/>
 <path d="M700,360 L760,380 L800,392 L790,420 L760,425 Z" fill="#566a6f" filter="url(#b6)" opacity="0.800"/>
 <path d="M800,470 L830,500 L850,540 L838,545Z" fill="#b9d6dd" filter="url(#b6)" opacity="0.700"/>
 <!-- cyan fringe along right silhouette and wedge boundary -->
 <path d="M1012,245 C1030,258 1045,270 1053,280 C1075,310 1095,350 1107,377" stroke="#bfe2ec" stroke-width="26" fill="none" filter="url(#b6)"/>
 <path d="M1080,316 C1074,345 1064,378 1052,416 C1046,440 1041,462 1037,490" stroke="#bfe3ee" stroke-width="34" fill="none" filter="url(#b6)"/>
 <!-- gray wedge -->
 <path d="M1078,318 L1110,360 L1170,480 L1139,490 L1036,490 L1040,464 L1051,419 L1063,382 L1072,352 Z" fill="#869ca1" filter="url(#b6)"/>
 <path d="M1090,360 L1150,480 L1060,485 L1072,420 Z" fill="#7f959a" filter="url(#b10)"/>
 <!-- gray near right boss -->
 <path d="M980,240 L1015,246 L1034,262 L1022,280 L1000,290 L984,285 Z" fill="#869ca1" filter="url(#b6)"/>
</g>
<!-- blend lens between top surface and bar -->
<path d="M839,529.500 L920,512.500 L1139,478.500 L1139,483.500 L845,539 Z" fill="#a3b6ba"/>
<path d="M920,512.500 C960,500 985,487 1005,481 C1040,471 1090,469 1139,467 L1139,478.500 Z" fill="#5c7075"/>
<path d="M838,529 C880,521 910,515 923,511 C960,499 985,486 1005,480 C1040,470 1090,468 1139,466" stroke="#d4e2e5" stroke-width="1.300" fill="none"/>
<path d="M920,512.500 L1139,478.500" stroke="#c4d3d6" stroke-width="1" fill="none"/>
<path d="M1012,245 C1030,258 1045,270 1053,280 C1075,310 1095,350 1107,377 L1133,447 L1140,467" stroke="#4a5b5f" stroke-width="1.200" fill="none"/>

<!-- right arm inner fillet -->
<path d="M970,250 L984,248 L990,262 L978,262 Z" fill="#7f959a"/>
<path d="M919.500,240.500 C924,237.600 930,237.300 936.400,237.500 C942,238.500 947,240 951,241.800 C956,244 960,246.500 964.400,249 C968,251 972,253 975.300,255.700 C979,258.500 982,262 983.800,265.400 C986,269 987,273 986.800,277.600 C987,282 987,286 986.200,289.700 C985,294 983,298 980.200,301.900 C977,306 972,310 968,314 L957.100,325 L954.700,322.500 L965.600,310.400 C969,306.500 972,303 974.100,299.500 C976.500,296 978,293 978.300,289.700 C979.200,286.500 979.300,283 979,280 C978,276.500 977,273 975.300,270.300 C973.500,267 971,264 968,261.800 C965,259 962,256.500 958.300,254.500 C954.500,252 950.500,250 946.200,248.400 C941.500,247 936.500,246 931.600,245.400 C927,244.800 922.500,244.500 918.800,243.600 Z" fill="#5c7075"/>
<path d="M920,239.500 C930,237.300 942,238.500 951,241.800 C960,246 968,251 975.300,255.700 C982,261 986,268 986.800,277.600 C987.500,287 984,297 978,304 C972,310 964,318 957.100,325" stroke="#aebfc3" stroke-width="1.800" fill="none"/>
<path d="M918.800,243.600 C927,244.800 938,246 946.200,248.400 C955,251.500 963,257 968,261.800 C974,267 978,274 979,280 C979.800,288 977,296 972,302 C967,308 961,315 954.700,322.500" stroke="#2c393c" stroke-width="2.200" fill="none"/>
<!-- right boss -->
<ellipse cx="988.700" cy="244.500" rx="23.700" ry="7.500" fill="#cfdee1" stroke="#56686c" stroke-width="0.800"/>
<path d="M966,243 C972,250 1005,251.500 1012,244" stroke="#8fa5aa" stroke-width="1.500" fill="none"/>
<path d="M972.500,218 C971,224 972.500,230 974,233 L974,240 C982,246.500 1002,246.500 1010,240 L1010,233 C1012,229 1012.500,223 1011,218 Z" fill="url(#cylH)" stroke="#4a5b5f" stroke-width="0.800"/>
<path d="M974,233.500 C982,238.500 1002,238.500 1010,233.500" stroke="#3e4e51" stroke-width="0.900" fill="none"/>
<ellipse cx="992" cy="217.500" rx="19" ry="7.800" fill="#b5c7cb" stroke="#3e4e51" stroke-width="1"/>
<ellipse cx="993.500" cy="216.800" rx="10.500" ry="5" fill="#55676b" stroke="#2e3b3e" stroke-width="0.900"/>
<path d="M984.500,218.500 C988,222 999,222 1003,218.500" stroke="#9db1b5" stroke-width="1.600" fill="none"/>

<!-- left arm dark band + bar end face -->
<path d="M652.7,354.1 L679.9,356.5 L699.4,357.9 L700.8,372.9 L714.8,384.1 L728.7,395.2 L740.0,405.3 L752.0,418.5 L764.0,431.8 L775.0,443.5 L786.0,455.0 L800.0,473.0 L812.0,490.5 L824.0,507.5 L835.8,524.8 L840.0,528.5 L839.1,540.7 L874.8,568.6 L863.7,621.0 L859.2,622.7 L852.5,616.6 L834.6,600.9 L817.9,584.2 L812.3,575.3 L807.9,554.1 L801.2,531.7 L794.5,515.0 L788.0,503.0 L780.0,488.5 L768.0,474.0 L756.8,460.0 L741.0,434.5 L732.2,420.0 L721.8,406.4 L707.8,393.2 L693.8,382.7 L679.9,376.4 L665.9,373.6 L649.9,372.2 Z" fill="url(#bandG)"/>
<path d="M655.5,356.9 L672.9,361.0 L686.9,365.9 L700.8,372.9 L714.8,384.1 L728.7,395.2 L740.0,405.3 L752.0,418.5 L764.0,431.8 L775.0,443.5 L786.0,455.0 L800.0,473.0 L812.0,490.5 L824.0,507.5 L835.8,524.8 L840.0,528.5" stroke="#e2eef0" stroke-width="4.200" fill="none" stroke-linecap="round" stroke-linejoin="round"/>
<path d="M655.5,356.9 L672.9,361.0 L686.9,365.9 L700.8,372.9 L714.8,384.1 L728.7,395.2" stroke="#9fb3b7" stroke-width="3.200" fill="none" stroke-linecap="round" stroke-linejoin="round"/>
<path d="M702.5,370.7 L716.5,381.9 L730.4,393.0 L741.7,403.1 L753.7,416.3 L765.7,429.6 L776.7,441.3 L787.7,452.8 L801.7,470.8 L813.7,488.3 L825.7,505.3 L837.5,522.6" stroke="#2f3d40" stroke-width="0.900" fill="none"/>
<path d="M835,524 L847,537.500 L841,543 L834.500,531 Z" fill="#cfdde0"/><path d="M840,531 L840.500,541 L874.300,569.300" stroke="#dbe7e9" stroke-width="6" fill="none" stroke-linejoin="round"/>
<path d="M872.500,571 L861.500,620.500" stroke="#7d9296" stroke-width="8" fill="none"/>
<path d="M872,571 L861,620.500" stroke="#c4d3d6" stroke-width="4.500" fill="none"/>

<!-- left boss -->
<path d="M699,366 C702,374 712,378.500 722,378.500 C731,378.500 738,376 739.500,372 L737,360 L703,358 Z" fill="#6f858a"/>
<path d="M697,364 C704,369 712,373 720,375.500 C726,377.500 731,378.500 738,378.500" stroke="#e4eef0" stroke-width="3" fill="none" stroke-linecap="round"/>
<path d="M700,347 C699,353 700.500,358 702,361 L702,367 C709,373.500 730,373.500 737,367 L737,361 C739,358 740,353 739,347 Z" fill="url(#cylH)" stroke="#4a5b5f" stroke-width="0.800"/>
<path d="M702,361.500 C709,366.500 730,366.500 737,361.500" stroke="#3e4e51" stroke-width="0.900" fill="none"/>
<ellipse cx="719.500" cy="347" rx="19.500" ry="8.300" fill="#b5c7cb" stroke="#3e4e51" stroke-width="1"/>
<ellipse cx="721" cy="345.800" rx="10.500" ry="5.300" fill="#55676b" stroke="#2e3b3e" stroke-width="0.900"/>
<path d="M712,347.500 C715.500,351.500 727,351.500 730.500,347.500" stroke="#9db1b5" stroke-width="1.600" fill="none"/>

<!-- bar top face -->
<path d="M838,529 L842,538 L1138.400,482.400 L1173,509.300 L873.900,568.600 L839,541 Z" fill="#7c9196"/>
<path d="M845,538.500 L1138.400,483.400" stroke="#dbe7e9" stroke-width="2.200" fill="none"/>
<path d="M874,567.600 L1173,509.300" stroke="#e6eff0" stroke-width="2.200" fill="none"/>
<path d="M1138.400,482.400 L1173,509.300" stroke="#3e4e51" stroke-width="1" fill="none"/>
<path d="M1139,467 L1138.400,482.400" stroke="#b9c9cc" stroke-width="1.500" fill="none"/>
<!-- bar front face -->
<path d="M873.900,568.600 L1173,510.300 L1176,516 L1164,558 L1097,573 L963.800,601 L861,622 L858.500,617 Z" fill="url(#barF)"/>
<path d="M878.500,591.500 L1153.800,538.800 L1148.600,545.800 L878.500,602.300 Z" fill="#95a9ad"/>
<path d="M1134,538 L1162,532.500 L1158.500,541 L1148,544.500 L1152,539 Z" fill="#27333610"/>
<path d="M1136,537.500 L1161.500,532.700 L1158.500,541.500 L1149,544.500 L1153.500,538.800 Z" fill="#283437"/>
<path d="M861,622 L963.800,601" stroke="#2e3b3e" stroke-width="1.200" fill="none"/>
<path d="M1097,573 L1164,558" stroke="#2e3b3e" stroke-width="1.200" fill="none"/>
<path d="M874,568 C870,585 865,605 860.500,620" stroke="#c9d6d9" stroke-width="2" fill="none"/>

<!-- stem -->
<path d="M915.500,610 L966,600 L964,655 L945,650 C935,640 925,630 913.500,619.500 Z" fill="url(#neckG)"/><path d="M913.500,619.500 C928,626 942,634 962,642" stroke="#2f3d40" stroke-width="1" fill="none"/>
<path d="M897,660 L899,696 L892,768 L887,795 L895,810 L916,822 L936,823.500 L942,810 L947,768 L955,690 L960,650 L930,640 Z" fill="url(#stemSide)"/>
<path d="M887,795 L895,810 L916,822 L936,823.500 L970,817 L1033,795 L1046,781 L1033,792 L942,810 L930,812 L905,806 Z" fill="#44555a"/>
<path d="M887,795 C890,806 905,818 936,823.500 L970,817 L1033,795 C1040,790 1044,786 1046,781" stroke="#3a484b" stroke-width="1.200" fill="none"/>
<path d="M963.800,601.700 L1094,573 L1085,612 L1072,664 L1061.500,716 L1051,768 L1046,781.500 L1033,792 L942,810 L947,768 L955,690 L962.500,638 Z" fill="url(#stemF)"/>
<path d="M963.800,602 L962.500,638 L955,690 L947,768 L942,810" stroke="#2f3c3f" stroke-width="1" fill="none"/>
<path d="M1091,580 L1082,620 L1069,674 L1058.500,726 L1048,776" stroke="#72878b" stroke-width="4" fill="none"/><path d="M1174.500,512 L1164.500,557" stroke="#a3b6ba" stroke-width="2.200" fill="none"/>

<!-- right lug -->
<path d="M1098,586 C1104,584 1110,590 1117,596 C1125,603 1132,608 1137,613 C1146,622 1146,640 1143,652 C1139,664 1124,671 1112,668 C1102,666 1094,664 1088,660 C1079,654 1073,645 1073,634 C1074,622 1080,606 1088,594 Z" fill="url(#lugR)" stroke="#3a484b" stroke-width="0.800"/>
<path d="M1100,587 C1110,594 1124,604 1136,613" stroke="#e4eef0" stroke-width="1.600" fill="none" opacity="0.800"/>
<ellipse cx="1120" cy="643.500" rx="24" ry="26" fill="#aabcc0" stroke="#364548" stroke-width="1" transform="rotate(20 1120 643.500)"/>
<ellipse cx="1121" cy="644" rx="19" ry="21" fill="url(#discG)" stroke="#55676b" stroke-width="0.800" transform="rotate(20 1121 644)"/>
<ellipse cx="1121" cy="644" rx="8" ry="6.800" fill="#e6eef0" stroke="#3e4e51" stroke-width="1" transform="rotate(-25 1121 644)"/>
<path d="M1114.500,643 A7 7 0 0 1 1126,638.500" stroke="#4f6165" stroke-width="2.200" fill="none"/>

<!-- left lug -->
<path d="M914,618 C920,617 926,620 932,626 C942,636 952,643 963,648 C975,654 979,668 976,684 C972,700 958,710 944,707 C932,704 918,696 908,686 C900,678 895,670 896,660 C897,648 902,630 914,618 Z" fill="url(#lugL)" stroke="#3a484b" stroke-width="0.800"/>
<path d="M915,619 C924,628 940,640 962,648" stroke="#e4eef0" stroke-width="1.600" fill="none" opacity="0.800"/>
<ellipse cx="952" cy="682" rx="24.500" ry="27.500" fill="#aabcc0" stroke="#364548" stroke-width="1" transform="rotate(20 952 682)"/>
<ellipse cx="953" cy="682.500" rx="19.500" ry="22" fill="url(#discG)" stroke="#55676b" stroke-width="0.800" transform="rotate(20 953 682.500)"/>
<ellipse cx="952.500" cy="682" rx="8" ry="6.800" fill="#e6eef0" stroke="#3e4e51" stroke-width="1" transform="rotate(-25 952.500 682)"/>
<path d="M945.500,681 A7 7 0 0 1 957,676.500" stroke="#4f6165" stroke-width="2.200" fill="none"/>
</svg>
</body></html>
